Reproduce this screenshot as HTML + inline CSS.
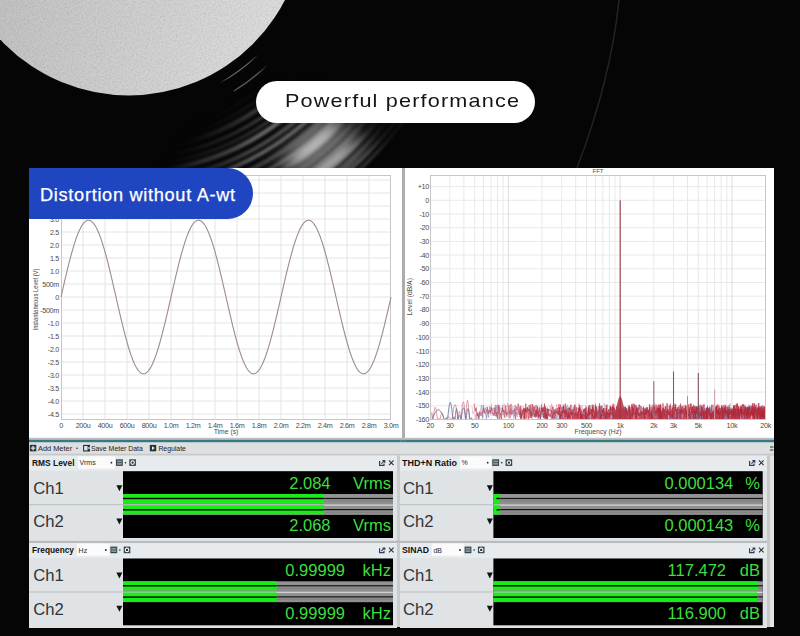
<!DOCTYPE html>
<html><head><meta charset="utf-8"><style>
*{margin:0;padding:0;box-sizing:border-box}
html,body{width:800px;height:636px;overflow:hidden;background:#000}
body{position:relative;font-family:"Liberation Sans", sans-serif}
.abs{position:absolute}
#pill{position:absolute;left:256px;top:81.2px;width:279px;height:42.3px;border-radius:21.2px;background:#fff;}
#pill span{position:absolute;left:28.8px;top:8.7px;font-size:18.5px;letter-spacing:1.0px;transform:scaleX(1.17);transform-origin:0 0;color:#151515;white-space:nowrap;line-height:22px}
#shot{position:absolute;left:29px;top:168px;width:745px;height:459px;background:#e2e4e6;overflow:hidden}
#lc{position:absolute;left:0;top:0;width:373px;height:270px;background:#fff}
#rc{position:absolute;left:376px;top:0;width:369px;height:270px;background:#fff}
#vsep{position:absolute;left:373px;top:0;width:3px;height:270px;background:linear-gradient(90deg,#fff 0,#fff 0.3px,#adadad 0.3px,#adadad 2.7px,#fff 2.7px)}
#teal{position:absolute;left:0;top:271px;width:745px;height:3.5px;background:#45737f}
#tb{position:absolute;left:0;top:274.5px;width:745px;height:12px;background:#e0e2e4;font-size:8.6px;color:#2a2a2a}
#tbl{position:absolute;left:0;top:286.5px;width:745px;height:1px;background:#c4c6c8}
#label{position:absolute;left:29px;top:168px;width:224px;height:51px;background:#1f45c0;border-radius:0 25.5px 25.5px 0}
#label span{position:absolute;left:11px;top:15.5px;font-size:18.2px;letter-spacing:0.69px;-webkit-text-stroke:0.25px #fff;color:#fff;white-space:nowrap;line-height:22px}
.mp{position:absolute;height:85px;background:#dde2e5}
.mh{position:absolute;left:0;top:0;right:0;height:14px;background:#e5e9ec;font-size:9.2px;line-height:14px}
.mt{position:absolute;left:3px;top:0;font-weight:bold;color:#111}
.dd{position:absolute;left:48px;top:1px;height:12px;background:#fbfbfb;font-size:7.5px;line-height:12px;color:#333}
.ddt{position:absolute;left:2px}
.dda{position:absolute;right:1px;font-size:6px}
.ch{position:absolute;left:5px;font-size:17.5px;color:#222;line-height:20px}
.tri{position:absolute;left:87px;width:0;height:0;border-left:3.2px solid transparent;border-right:3.2px solid transparent;border-top:6px solid #111}
.sep{position:absolute;left:0;top:48px;width:94px;height:1px;background:#b8bcbf}
.disp{position:absolute;left:94px;top:15px;height:67px;background:#000;overflow:hidden}
.val,.unit{position:absolute;font-size:16px;line-height:18px;color:#3ee03e;white-space:nowrap}
.gbar{position:absolute;left:0;right:0;height:9px;background:#9a9a9a}
.gr{position:absolute;left:0;background:#1ef01e}
</style></head><body>

<svg width="800" height="636" style="position:absolute;left:0;top:0">
<defs>
 <filter id="tex" x="-10%" y="-10%" width="120%" height="120%">
  <feTurbulence type="fractalNoise" baseFrequency="0.55" numOctaves="3" seed="3" result="n"/>
  <feColorMatrix in="n" type="matrix" values="0 0 0 0 0  0 0 0 0 0  0 0 0 0 0  0 0 0 -1.2 0.75" result="g"/>
  <feComposite in="g" in2="SourceAlpha" operator="in"/>
 </filter>
 <linearGradient id="lab" x1="0" y1="0" x2="260" y2="70" gradientUnits="userSpaceOnUse">
  <stop offset="0" stop-color="#c2c2c2"/>
  <stop offset="0.5" stop-color="#cfcfcf"/>
  <stop offset="1" stop-color="#dcdcdc"/>
 </linearGradient>
 <filter id="blurD" x="-50%" y="-50%" width="200%" height="200%"><feGaussianBlur stdDeviation="1.6"/></filter>
 <filter id="blurA" x="-50%" y="-50%" width="200%" height="200%"><feGaussianBlur stdDeviation="2.8"/></filter>
 <filter id="blurM" x="-50%" y="-50%" width="200%" height="200%"><feGaussianBlur stdDeviation="11"/></filter>
 <filter id="blurG" x="-80%" y="-80%" width="260%" height="260%"><feGaussianBlur stdDeviation="14"/></filter>
 <filter id="blurT" x="-50%" y="-50%" width="200%" height="200%"><feGaussianBlur stdDeviation="0.6"/></filter>
 <mask id="wm2" maskUnits="userSpaceOnUse" x="0" y="0" width="800" height="636"><path d="M242.45 46.03L216.26 65.42L242.01 108.28L275.91 83.19Z" fill="#fff" filter="url(#blurM2)"/></mask>
 <filter id="blurM2" x="-50%" y="-50%" width="200%" height="200%"><feGaussianBlur stdDeviation="5"/></filter>
 <mask id="wm3" maskUnits="userSpaceOnUse" x="0" y="0" width="800" height="636">
  <g filter="url(#blurM)"><path d="M250 104L305 96L440 172L172 178Z" fill="#8a8a8a"/><path d="M262 112L310 105L380 172L230 176Z" fill="#fff"/><path d="M380 100L560 172L420 175Z" fill="#444"/></g>
 </mask>
 <mask id="wm" maskUnits="userSpaceOnUse" x="0" y="0" width="800" height="636">
  <path d="M241.84 32.84L218.17 52.35L330.01 218.15L383.26 174.26Z" fill="#fff" filter="url(#blurM)"/>
 </mask>
</defs>
<rect width="800" height="636" fill="#050506"/>
<ellipse cx="318" cy="150" rx="55" ry="22" transform="rotate(-42 318 150)" fill="#3a3a3a" filter="url(#blurG)"/>

<g filter="url(#blurT)" mask="url(#wm2)"><path d="M219.36 83.25A187 187 0 0 0 257.42 55.35" stroke="#6a6a6a" stroke-width="1.3" fill="none"/><path d="M233.72 91.08A201 201 0 0 0 267.06 65.5" stroke="#5a5a5a" stroke-width="1.3" fill="none"/></g>
<g mask="url(#wm3)"><g filter="url(#blurD)"><path d="M151.07 132.53A214 214 0 0 0 317.65 20.17" stroke="rgb(75,75,75)" stroke-width="2.59" fill="none"/><path d="M151.86 140.07A221.5842329704427 221.5842329704427 0 0 0 324.35 23.73" stroke="rgb(73,73,73)" stroke-width="2.39" fill="none"/><path d="M152.66 147.64A229.19059702838302 229.19059702838302 0 0 0 331.06 27.3" stroke="rgb(114,114,114)" stroke-width="4.29" fill="none"/><path d="M153.6 156.65A238.2512474384048 238.2512474384048 0 0 0 339.06 31.55" stroke="rgb(99,99,99)" stroke-width="2.55" fill="none"/><path d="M154.35 163.71A245.35797801217058 245.35797801217058 0 0 0 345.34 34.89" stroke="rgb(75,75,75)" stroke-width="2.43" fill="none"/><path d="M155.06 170.53A252.21557974248626 252.21557974248626 0 0 0 351.39 38.11" stroke="rgb(115,115,115)" stroke-width="4.32" fill="none"/><path d="M156.03 179.71A261.44218912929557 261.44218912929557 0 0 0 359.54 42.44" stroke="rgb(80,80,80)" stroke-width="4" fill="none"/><path d="M156.78 186.91A268.6815889584937 268.6815889584937 0 0 0 365.93 45.84" stroke="rgb(110,110,110)" stroke-width="3.57" fill="none"/><path d="M157.77 196.28A278.1001823904591 278.1001823904591 0 0 0 374.25 50.26" stroke="rgb(74,74,74)" stroke-width="4.2" fill="none"/><path d="M158.65 204.65A286.5235899253386 286.5235899253386 0 0 0 381.69 54.21" stroke="rgb(97,97,97)" stroke-width="3.68" fill="none"/><path d="M159.35 211.33A293.23475062230176 293.23475062230176 0 0 0 387.61 57.37" stroke="rgb(74,74,74)" stroke-width="3.18" fill="none"/><path d="M160.37 221.01A302.9731040779014 302.9731040779014 0 0 0 396.21 61.94" stroke="rgb(100,100,100)" stroke-width="4.16" fill="none"/><path d="M161.12 228.17A310.1740870361947 310.1740870361947 0 0 0 402.57 65.32" stroke="rgb(101,101,101)" stroke-width="4.27" fill="none"/><path d="M162.12 237.65A319.70335599570984 319.70335599570984 0 0 0 410.98 69.79" stroke="rgb(97,97,97)" stroke-width="4.12" fill="none"/><path d="M162.92 245.27A327.35914016823676 327.35914016823676 0 0 0 417.74 73.39" stroke="rgb(93,93,93)" stroke-width="3.5" fill="none"/><path d="M163.61 251.87A334.0044225927232 334.0044225927232 0 0 0 423.61 76.51" stroke="rgb(114,114,114)" stroke-width="2.76" fill="none"/><path d="M164.26 258.01A340.1773764690122 340.1773764690122 0 0 0 429.06 79.4" stroke="rgb(104,104,104)" stroke-width="2.12" fill="none"/></g></g>
<g mask="url(#wm)"><g filter="url(#blurA)"><path d="M268.7 162.19A280 280 0 0 0 330.12 114.2" stroke="#6a6a6a" stroke-width="8" fill="none"/><path d="M279.09 169.99A292 292 0 0 0 342.26 118.84" stroke="#b4b4b4" stroke-width="12" fill="none"/><path d="M289.8 177.51A304 304 0 0 0 351.03 127.03" stroke="#707070" stroke-width="5" fill="none"/><path d="M300.81 184.72A316 316 0 0 0 363.53 131.15" stroke="#a0a0a0" stroke-width="11" fill="none"/><path d="M317.98 190.02A330 330 0 0 0 381.49 131.82" stroke="#5a5a5a" stroke-width="6" fill="none"/></g></g>
<path d="M 619 0 C 614 50, 601 105, 577 168" stroke="#242426" stroke-width="1.5" fill="none" filter="url(#blurT)"/>
<circle cx="128.7" cy="-80.3" r="175.7" fill="url(#lab)"/>
<circle cx="128.7" cy="-80.3" r="175.7" fill="#000" filter="url(#tex)" opacity="0.14"/>
</svg>
<div id="pill"><span>Powerful performance</span></div>
<div id="shot">
 <div id="lc"><svg width="373" height="270" style="position:absolute;left:0;top:0"><path d="M32 246H362M32 233H362M32 220H362M32 207H362M32 194H362M32 181H362M32 168H362M32 155H362M32 142H362M32 129H362M32 116H362M32 103H362M32 90H362M32 77H362M32 64H362M32 51H362M32 38H362M32 25H362M32 12H362M54 7V252M76 7V252M98 7V252M120 7V252M142 7V252M164 7V252M186 7V252M208 7V252M230 7V252M252 7V252M274 7V252M296 7V252M318 7V252M340 7V252" stroke="#e4e4e4" stroke-width="1" fill="none"/><rect x="32.5" y="7.5" width="329" height="244" fill="none" stroke="#c6c6c6" stroke-width="1"/><polyline points="32,129 32.83,125.38 33.65,121.77 34.48,118.18 35.3,114.61 36.12,111.07 36.95,107.57 37.78,104.12 38.6,100.73 39.42,97.4 40.25,94.13 41.08,90.95 41.9,87.85 42.72,84.84 43.55,81.93 44.38,79.12 45.2,76.43 46.03,73.85 46.85,71.39 47.67,69.06 48.5,66.87 49.33,64.81 50.15,62.9 50.97,61.13 51.8,59.51 52.62,58.05 53.45,56.74 54.28,55.6 55.1,54.61 55.92,53.8 56.75,53.15 57.58,52.66 58.4,52.35 59.22,52.21 60.05,52.24 60.88,52.44 61.7,52.81 62.53,53.34 63.35,54.05 64.17,54.92 65,55.96 65.83,57.16 66.65,58.52 67.47,60.03 68.3,61.7 69.12,63.52 69.95,65.48 70.78,67.58 71.6,69.82 72.42,72.2 73.25,74.69 74.08,77.31 74.9,80.05 75.72,82.89 76.55,85.83 77.38,88.87 78.2,92 79.03,95.21 79.85,98.5 80.67,101.85 81.5,105.27 82.33,108.73 83.15,112.25 83.97,115.8 84.8,119.37 85.62,122.97 86.45,126.59 87.28,130.21 88.1,133.82 88.92,137.43 89.75,141.01 90.58,144.57 91.4,148.1 92.22,151.58 93.05,155.02 93.88,158.39 94.7,161.7 95.53,164.94 96.35,168.09 97.17,171.16 98,174.14 98.83,177.02 99.65,179.79 100.47,182.45 101.3,184.98 102.12,187.4 102.95,189.68 103.78,191.83 104.6,193.84 105.43,195.71 106.25,197.43 107.07,199 107.9,200.41 108.72,201.66 109.55,202.75 110.38,203.68 111.2,204.44 112.03,205.03 112.85,205.46 113.68,205.71 114.5,205.8 115.32,205.71 116.15,205.46 116.97,205.03 117.8,204.44 118.62,203.68 119.45,202.75 120.28,201.66 121.1,200.41 121.93,199 122.75,197.43 123.57,195.71 124.4,193.84 125.22,191.83 126.05,189.68 126.88,187.4 127.7,184.98 128.53,182.45 129.35,179.79 130.18,177.02 131,174.14 131.82,171.16 132.65,168.09 133.47,164.94 134.3,161.7 135.12,158.39 135.95,155.02 136.78,151.58 137.6,148.1 138.43,144.57 139.25,141.01 140.07,137.43 140.9,133.82 141.72,130.21 142.55,126.59 143.38,122.97 144.2,119.37 145.03,115.8 145.85,112.25 146.68,108.73 147.5,105.27 148.32,101.85 149.15,98.5 149.97,95.21 150.8,92 151.62,88.87 152.45,85.83 153.28,82.89 154.1,80.05 154.93,77.31 155.75,74.69 156.57,72.2 157.4,69.82 158.22,67.58 159.05,65.48 159.88,63.52 160.7,61.7 161.53,60.03 162.35,58.52 163.18,57.16 164,55.96 164.82,54.92 165.65,54.05 166.47,53.34 167.3,52.81 168.12,52.44 168.95,52.24 169.78,52.21 170.6,52.35 171.43,52.66 172.25,53.15 173.07,53.8 173.9,54.61 174.72,55.6 175.55,56.74 176.38,58.05 177.2,59.51 178.03,61.13 178.85,62.9 179.68,64.81 180.5,66.87 181.32,69.06 182.15,71.39 182.97,73.85 183.8,76.43 184.62,79.12 185.45,81.93 186.28,84.84 187.1,87.85 187.93,90.95 188.75,94.13 189.57,97.4 190.4,100.73 191.22,104.12 192.05,107.57 192.88,111.07 193.7,114.61 194.53,118.18 195.35,121.77 196.18,125.38 197,129 197.82,132.62 198.65,136.23 199.47,139.82 200.3,143.39 201.12,146.93 201.95,150.43 202.78,153.88 203.6,157.27 204.43,160.6 205.25,163.87 206.07,167.05 206.9,170.15 207.72,173.16 208.55,176.07 209.38,178.88 210.2,181.57 211.03,184.15 211.85,186.61 212.68,188.94 213.5,191.13 214.32,193.19 215.15,195.1 215.97,196.87 216.8,198.49 217.62,199.95 218.45,201.26 219.28,202.4 220.1,203.39 220.93,204.2 221.75,204.85 222.57,205.34 223.4,205.65 224.22,205.79 225.05,205.76 225.88,205.56 226.7,205.19 227.52,204.66 228.35,203.95 229.18,203.08 230,202.04 230.82,200.84 231.65,199.48 232.48,197.97 233.3,196.3 234.12,194.48 234.95,192.52 235.77,190.42 236.6,188.18 237.43,185.8 238.25,183.31 239.07,180.69 239.9,177.95 240.73,175.11 241.55,172.17 242.38,169.13 243.2,166 244.02,162.79 244.85,159.5 245.68,156.15 246.5,152.73 247.32,149.27 248.15,145.75 248.98,142.2 249.8,138.63 250.62,135.03 251.45,131.41 252.27,127.79 253.1,124.18 253.93,120.57 254.75,116.99 255.57,113.43 256.4,109.9 257.23,106.42 258.05,102.98 258.88,99.61 259.7,96.3 260.52,93.06 261.35,89.91 262.18,86.84 263,83.86 263.82,80.98 264.65,78.21 265.48,75.55 266.3,73.02 267.12,70.6 267.95,68.32 268.77,66.17 269.6,64.16 270.43,62.29 271.25,60.57 272.07,59 272.9,57.59 273.73,56.34 274.55,55.25 275.38,54.32 276.2,53.56 277.02,52.97 277.85,52.54 278.68,52.29 279.5,52.2 280.32,52.29 281.15,52.54 281.98,52.97 282.8,53.56 283.62,54.32 284.45,55.25 285.27,56.34 286.1,57.59 286.93,59 287.75,60.57 288.57,62.29 289.4,64.16 290.23,66.17 291.05,68.32 291.88,70.6 292.7,73.02 293.52,75.55 294.35,78.21 295.18,80.98 296,83.86 296.82,86.84 297.65,89.91 298.48,93.06 299.3,96.3 300.12,99.61 300.95,102.98 301.77,106.42 302.6,109.9 303.43,113.43 304.25,116.99 305.07,120.57 305.9,124.18 306.73,127.79 307.55,131.41 308.38,135.03 309.2,138.63 310.02,142.2 310.85,145.75 311.68,149.27 312.5,152.73 313.32,156.15 314.15,159.5 314.98,162.79 315.8,166 316.62,169.13 317.45,172.17 318.27,175.11 319.1,177.95 319.93,180.69 320.75,183.31 321.57,185.8 322.4,188.18 323.23,190.42 324.05,192.52 324.88,194.48 325.7,196.3 326.52,197.97 327.35,199.48 328.18,200.84 329,202.04 329.82,203.08 330.65,203.95 331.48,204.66 332.3,205.19 333.12,205.56 333.95,205.76 334.77,205.79 335.6,205.65 336.43,205.34 337.25,204.85 338.07,204.2 338.9,203.39 339.73,202.4 340.55,201.26 341.38,199.95 342.2,198.49 343.02,196.87 343.85,195.1 344.68,193.19 345.5,191.13 346.32,188.94 347.15,186.61 347.98,184.15 348.8,181.57 349.62,178.88 350.45,176.07 351.27,173.16 352.1,170.15 352.93,167.05 353.75,163.87 354.57,160.6 355.4,157.27 356.23,153.88 357.05,150.43 357.88,146.93 358.7,143.39 359.52,139.82 360.35,136.23 361.18,132.62 362,129" fill="none" stroke="#9e8a8a" stroke-width="1.1"/><text x="30" y="248.5" text-anchor="end" font-size="7.2" fill="#4a4a4a" letter-spacing="-0.3" font-family='"Liberation Sans", sans-serif'>-4.5</text><text x="30" y="235.5" text-anchor="end" font-size="7.2" fill="#4a4a4a" letter-spacing="-0.3" font-family='"Liberation Sans", sans-serif'>-4.0</text><text x="30" y="222.5" text-anchor="end" font-size="7.2" fill="#4a4a4a" letter-spacing="-0.3" font-family='"Liberation Sans", sans-serif'>-3.5</text><text x="30" y="209.5" text-anchor="end" font-size="7.2" fill="#4a4a4a" letter-spacing="-0.3" font-family='"Liberation Sans", sans-serif'>-3.0</text><text x="30" y="196.5" text-anchor="end" font-size="7.2" fill="#4a4a4a" letter-spacing="-0.3" font-family='"Liberation Sans", sans-serif'>-2.5</text><text x="30" y="183.5" text-anchor="end" font-size="7.2" fill="#4a4a4a" letter-spacing="-0.3" font-family='"Liberation Sans", sans-serif'>-2.0</text><text x="30" y="170.5" text-anchor="end" font-size="7.2" fill="#4a4a4a" letter-spacing="-0.3" font-family='"Liberation Sans", sans-serif'>-1.5</text><text x="30" y="157.5" text-anchor="end" font-size="7.2" fill="#4a4a4a" letter-spacing="-0.3" font-family='"Liberation Sans", sans-serif'>-1.0</text><text x="30" y="144.5" text-anchor="end" font-size="7.2" fill="#4a4a4a" letter-spacing="-0.3" font-family='"Liberation Sans", sans-serif'>-500m</text><text x="30" y="131.5" text-anchor="end" font-size="7.2" fill="#4a4a4a" letter-spacing="-0.3" font-family='"Liberation Sans", sans-serif'>0</text><text x="30" y="118.5" text-anchor="end" font-size="7.2" fill="#4a4a4a" letter-spacing="-0.3" font-family='"Liberation Sans", sans-serif'>500m</text><text x="30" y="105.5" text-anchor="end" font-size="7.2" fill="#4a4a4a" letter-spacing="-0.3" font-family='"Liberation Sans", sans-serif'>1.0</text><text x="30" y="92.5" text-anchor="end" font-size="7.2" fill="#4a4a4a" letter-spacing="-0.3" font-family='"Liberation Sans", sans-serif'>1.5</text><text x="30" y="79.5" text-anchor="end" font-size="7.2" fill="#4a4a4a" letter-spacing="-0.3" font-family='"Liberation Sans", sans-serif'>2.0</text><text x="30" y="66.5" text-anchor="end" font-size="7.2" fill="#4a4a4a" letter-spacing="-0.3" font-family='"Liberation Sans", sans-serif'>2.5</text><text x="30" y="53.5" text-anchor="end" font-size="7.2" fill="#4a4a4a" letter-spacing="-0.3" font-family='"Liberation Sans", sans-serif'>3.0</text><text x="32" y="260" text-anchor="middle" font-size="7.2" fill="#4a4a4a" letter-spacing="-0.35" font-family='"Liberation Sans", sans-serif'>0</text><text x="54" y="260" text-anchor="middle" font-size="7.2" fill="#4a4a4a" letter-spacing="-0.35" font-family='"Liberation Sans", sans-serif'>200u</text><text x="76" y="260" text-anchor="middle" font-size="7.2" fill="#4a4a4a" letter-spacing="-0.35" font-family='"Liberation Sans", sans-serif'>400u</text><text x="98" y="260" text-anchor="middle" font-size="7.2" fill="#4a4a4a" letter-spacing="-0.35" font-family='"Liberation Sans", sans-serif'>600u</text><text x="120" y="260" text-anchor="middle" font-size="7.2" fill="#4a4a4a" letter-spacing="-0.35" font-family='"Liberation Sans", sans-serif'>800u</text><text x="142" y="260" text-anchor="middle" font-size="7.2" fill="#4a4a4a" letter-spacing="-0.35" font-family='"Liberation Sans", sans-serif'>1.0m</text><text x="164" y="260" text-anchor="middle" font-size="7.2" fill="#4a4a4a" letter-spacing="-0.35" font-family='"Liberation Sans", sans-serif'>1.2m</text><text x="186" y="260" text-anchor="middle" font-size="7.2" fill="#4a4a4a" letter-spacing="-0.35" font-family='"Liberation Sans", sans-serif'>1.4m</text><text x="208" y="260" text-anchor="middle" font-size="7.2" fill="#4a4a4a" letter-spacing="-0.35" font-family='"Liberation Sans", sans-serif'>1.6m</text><text x="230" y="260" text-anchor="middle" font-size="7.2" fill="#4a4a4a" letter-spacing="-0.35" font-family='"Liberation Sans", sans-serif'>1.8m</text><text x="252" y="260" text-anchor="middle" font-size="7.2" fill="#4a4a4a" letter-spacing="-0.35" font-family='"Liberation Sans", sans-serif'>2.0m</text><text x="274" y="260" text-anchor="middle" font-size="7.2" fill="#4a4a4a" letter-spacing="-0.35" font-family='"Liberation Sans", sans-serif'>2.2m</text><text x="296" y="260" text-anchor="middle" font-size="7.2" fill="#4a4a4a" letter-spacing="-0.35" font-family='"Liberation Sans", sans-serif'>2.4m</text><text x="318" y="260" text-anchor="middle" font-size="7.2" fill="#4a4a4a" letter-spacing="-0.35" font-family='"Liberation Sans", sans-serif'>2.6m</text><text x="340" y="260" text-anchor="middle" font-size="7.2" fill="#4a4a4a" letter-spacing="-0.35" font-family='"Liberation Sans", sans-serif'>2.8m</text><text x="362" y="260" text-anchor="middle" font-size="7.2" fill="#4a4a4a" letter-spacing="-0.35" font-family='"Liberation Sans", sans-serif'>3.0m</text><text x="197" y="266.3" text-anchor="middle" font-size="6.8" fill="#4a4a4a" font-family='"Liberation Sans", sans-serif'>Time (s)</text><text transform="translate(8.799999999999997 131.5) rotate(-90)" text-anchor="middle" font-size="6.8" fill="#4a4a4a" font-family='"Liberation Sans", sans-serif' textLength="62" lengthAdjust="spacingAndGlyphs">Instantaneous Level (V)</text></svg></div>
 <div id="vsep"></div>
 <div id="rc"><svg width="369" height="270" style="position:absolute;left:0;top:0"><path d="M25 18.6H361M25 32.3H361M25 46H361M25 59.7H361M25 73.4H361M25 87.1H361M25 100.8H361M25 114.5H361M25 128.2H361M25 141.9H361M25 155.6H361M25 169.3H361M25 183H361M25 196.7H361M25 210.4H361M25 224.1H361M25 237.8H361M44.89 7V252M58.86 7V252M69.69 7V252M78.54 7V252M86.03 7V252M92.51 7V252M98.23 7V252M137 7V252M156.69 7V252M170.66 7V252M181.49 7V252M190.34 7V252M197.83 7V252M204.31 7V252M210.03 7V252M248.8 7V252M268.49 7V252M282.46 7V252M293.29 7V252M302.14 7V252M309.63 7V252M316.11 7V252M321.83 7V252" stroke="#e9e9e9" stroke-width="1" fill="none"/><path d="M103.34 7V252M215.14 7V252M326.94 7V252" stroke="#dedede" stroke-width="1" fill="none"/><polyline points="25.5,252 25.68,251.04 25.86,249.3 26.04,247.74 26.21,246.44 26.39,245.46 26.57,244.86 26.75,244.65 26.93,244.86 27.11,245.46 27.29,246.44 27.46,247.74 27.64,249.3 27.82,251.04 28,252 28,252 28.32,249.82 28.64,246.93 28.96,244.33 29.29,242.16 29.61,240.53 29.93,239.51 30.25,239.17 30.57,239.51 30.89,240.53 31.21,242.16 31.54,244.33 31.86,246.93 32.18,249.82 32.5,252 32.5,252 32.68,252 32.86,251.68 33.04,251.16 33.21,250.73 33.39,250.4 33.57,250.2 33.75,250.13 33.93,250.2 34.11,250.4 34.29,250.73 34.46,251.16 34.64,251.68 34.82,252 35,252 35,252 35.29,251.04 35.57,249.3 35.86,247.74 36.14,246.44 36.43,245.46 36.71,244.86 37,244.65 37.29,244.86 37.57,245.46 37.86,246.44 38.14,247.74 38.43,249.3 38.71,251.04 39,252 39,252 39.57,251.96 40.14,251.09 40.71,250.31 41.29,249.66 41.86,249.17 42.43,248.86 43,248.76 43.57,248.86 44.14,249.17 44.71,249.66 45.29,250.31 45.86,251.09 46.43,251.96 47,252 47,252 47.43,249.21 47.86,245.74 48.29,242.62 48.71,240.02 49.14,238.06 49.57,236.84 50,236.43 50.43,236.84 50.86,238.06 51.29,240.02 51.71,242.62 52.14,245.74 52.57,249.21 53,252 53,252 53.21,250.74 53.43,248.71 53.64,246.89 53.86,245.37 54.07,244.23 54.29,243.52 54.5,243.28 54.71,243.52 54.93,244.23 55.14,245.37 55.36,246.89 55.57,248.71 55.79,250.74 56,252 56,252 56.32,248.6 56.64,244.55 56.96,240.91 57.29,237.87 57.61,235.59 57.93,234.17 58.25,233.69 58.57,234.17 58.89,235.59 59.21,237.87 59.54,240.91 59.86,244.55 60.18,248.6 60.5,252 60.5,252 60.79,248.3 61.07,243.95 61.36,240.06 61.64,236.8 61.93,234.36 62.21,232.84 62.5,232.32 62.79,232.84 63.07,234.36 63.36,236.8 63.64,240.06 63.93,243.95 64.21,248.3 64.5,252 64.5,252 64.75,252 65,251.68 65.25,251.16 65.5,250.73 65.75,250.4 66,250.2 66.25,250.13 66.5,250.2 66.75,250.4 67,250.73 67.25,251.16 67.5,251.68 67.75,252 68,252" fill="none" stroke="#d88494" stroke-width="0.9" opacity="0.9"/><polyline points="25.5,252 25.57,252 25.64,252 25.71,252 25.79,251.8 25.86,251.64 25.93,251.53 26,251.5 26.07,251.53 26.14,251.64 26.21,251.8 26.29,252 26.36,252 26.43,252 26.5,252 26.5,252 27.46,250.43 28.43,248.11 29.39,246.04 30.36,244.3 31.32,243 32.29,242.18 33.25,241.91 34.21,242.18 35.18,243 36.14,244.3 37.11,246.04 38.07,248.11 39.04,250.43 40,252 40,252 40.18,252 40.36,251.68 40.54,251.16 40.71,250.73 40.89,250.4 41.07,250.2 41.25,250.13 41.43,250.2 41.61,250.4 41.79,250.73 41.96,251.16 42.14,251.68 42.32,252 42.5,252 42.5,252 42.89,248.75 43.29,244.85 43.68,241.34 44.07,238.41 44.46,236.21 44.86,234.84 45.25,234.38 45.64,234.84 46.04,236.21 46.43,238.41 46.82,241.34 47.21,244.85 47.61,248.75 48,252 48,252 48.14,251.96 48.29,251.09 48.43,250.31 48.57,249.66 48.71,249.17 48.86,248.86 49,248.76 49.14,248.86 49.29,249.17 49.43,249.66 49.57,250.31 49.71,251.09 49.86,251.96 50,252 50,252 50.21,250.13 50.43,247.52 50.64,245.18 50.86,243.23 51.07,241.76 51.29,240.85 51.5,240.54 51.71,240.85 51.93,241.76 52.14,243.23 52.36,245.18 52.57,247.52 52.79,250.13 53,252 53,252 53.21,251.65 53.43,250.49 53.64,249.45 53.86,248.59 54.07,247.93 54.29,247.53 54.5,247.39 54.71,247.53 54.93,247.93 55.14,248.59 55.36,249.45 55.57,250.49 55.79,251.65 56,252 56,252 56.36,249.97 56.71,247.22 57.07,244.76 57.43,242.69 57.79,241.14 58.14,240.18 58.5,239.86 58.86,240.18 59.21,241.14 59.57,242.69 59.93,244.76 60.29,247.22 60.64,249.97 61,252 61,252 61.29,250.13 61.57,247.52 61.86,245.18 62.14,243.23 62.43,241.76 62.71,240.85 63,240.54 63.29,240.85 63.57,241.76 63.86,243.23 64.14,245.18 64.43,247.52 64.71,250.13 65,252 65,252 65.21,252 65.43,251.68 65.64,251.16 65.86,250.73 66.07,250.4 66.29,250.2 66.5,250.13 66.71,250.2 66.93,250.4 67.14,250.73 67.36,251.16 67.57,251.68 67.79,252 68,252" fill="none" stroke="#64709a" stroke-width="0.9" opacity="0.9"/><polygon points="155,252 155,243.98 156.19,243.02 157.55,243.31 158.89,247.19 159.86,242.17 160.98,242.39 161.67,244.75 162.46,244.34 163.52,247.23 164.3,245.77 165.63,243.09 166.36,242.91 167.07,243.89 167.77,247.25 169.07,246.1 169.84,241.86 171.14,245.64 172.51,244.26 173.65,246.08 175,243.41 176.38,242.28 177.21,245.19 177.95,246.36 178.6,245.5 179.68,247.13 180.82,245.28 181.67,242.64 182.66,245.38 183.64,243.24 184.29,241.75 184.91,242.98 186.18,246.98 187.41,245.06 188.47,247.01 189.11,246.06 190.48,245.96 191.68,241.93 193.03,245.12 193.92,244.13 195.14,246.4 196.34,242.61 197.62,246.76 198.98,246.45 199.85,243.6 201.19,245.07 202.53,243.93 203.38,245.17 204.12,246.47 204.84,243.12 206.24,245.99 206.88,241.47 207.9,244.64 208.69,243.6 209.95,244.34 210.89,246.53 212.22,246.64 213.22,242.21 213.92,242.79 215.28,243.33 216.51,246.19 217.46,245.95 218.74,245.14 219.7,241.27 220.98,241.38 221.94,244.05 223.13,244.09 223.96,244.49 224.68,244.63 226.07,241.42 227.17,243.93 228.04,246.17 228.86,242.37 230.15,244.66 231.38,242.38 232.54,242.98 233.74,244.61 234.91,245.05 235.9,242.36 237.05,244.96 238.41,243 239.47,246.48 240.51,245.16 241.64,243.99 242.9,242.97 244.14,244.59 245.25,242.45 246.51,244.56 247.79,241.7 248.94,241.1 250.3,243.6 251.33,245.52 252.6,241.28 253.58,242.62 254.75,242.39 255.49,242.11 256.56,242.73 257.49,242.95 258.71,242.87 259.89,246.19 260.62,243.92 261.74,245.12 262.89,242.86 263.52,243.72 264.3,246 265.01,244.55 265.75,245.23 266.38,243.73 267.29,242.92 268.36,244.96 269.68,246.24 270.6,244.71 271.53,245.6 272.8,244.17 273.43,242.85 274.1,243.21 274.97,243.01 276.34,241.69 277.28,241.72 278.39,244.13 279.1,242.89 280.15,240.9 281.53,242.79 282.41,241.22 283.01,245.52 284.06,242.73 284.78,242.65 286.09,244.02 287.03,244.83 287.87,240.74 288.77,240.79 290.1,242.78 290.91,240.66 291.91,243.75 292.76,240.62 293.76,244.44 294.74,245.33 295.83,243.55 296.67,241.69 297.93,245.89 298.96,244.45 300.3,241.66 301.1,244.47 301.83,240.51 302.66,242.58 303.64,242.37 304.72,241.82 305.42,241.72 306.26,242.96 307.13,244.25 308.15,243.32 309.04,241.77 310.11,245.64 310.91,243.34 312.25,240.96 313.28,245.73 314.51,243.45 315.57,241.91 316.67,243.14 318,243.65 318.92,241.09 319.67,244.12 320.94,245.37 322.21,241.92 323.15,244.14 324.38,240.71 325.09,243.07 326.13,242.96 326.99,244.83 328.06,241.21 328.72,244.4 329.97,241.31 331.1,245.49 332.28,240.26 333.68,241.76 334.32,240.99 335.1,242.05 336.46,241.68 337.17,243.97 338.5,244.74 339.59,243.28 340.32,242.13 340.95,244.94 341.86,245.13 342.5,242.37 343.7,240.69 344.4,243.14 345.25,242.2 346.25,240.34 347.15,245.17 348.3,244.63 349.41,242.68 350.74,242.4 351.83,243.98 352.87,244.02 354.08,242.57 354.78,244.11 355.68,241.35 356.42,241.47 357.55,244.9 358.68,244.86 359.38,242.1 360,252" fill="#c43c50" opacity="0.9"/><polyline points="67,238.46 67.89,245.91 68.79,243.65 69.77,244.18 70.75,240.4 71.83,247.33 72.91,245.99 73.81,248.8 74.7,245.26 75.7,244.17 76.7,243.47 77.59,252 78.48,237.92 79.6,243.28 80.71,245.65 81.7,249.26 82.7,244.75 83.65,242.44 84.6,244.32 85.51,243.91 86.42,235.85 87.26,247.9 88.09,242.26 89.04,247.56 90,245.61 90.84,243.38 91.68,237.47 92.54,250.58 93.39,236.22 94.45,244.6 95.52,239.65 96.52,244.87 97.52,240.8 98.33,243.81 99.13,235.9 99.95,243.14 100.78,242.02 101.66,247.92 102.54,235.12 103.41,248.63 104.28,245 105.03,245 105.79,240.58 106.84,247.48 107.88,237.82 108.78,250.44 109.69,239.92 110.61,246.05 111.53,244.16 112.31,249.05 113.1,242.22 114.1,246.32 115.11,244.89 115.92,252 116.74,237.5 117.7,248.76 118.66,238.61 119.58,243.02 120.5,241.56 121.49,242.03 122.49,239.55 123.48,243.19 124.47,241.9 125.32,250.16 126.16,244.24 127.12,252 128.08,237.54 129.01,247.57 129.94,245.45 130.87,250.04 131.81,241.42 132.58,251 133.34,242.31 134.04,243.02 134.74,237.85 135.7,247.62 136.67,235.51 137.41,247.11 138.16,245.71 139.04,250.55 139.92,237.3 140.83,243.21 141.74,241.35 142.58,246.5 143.41,242.64 144.32,247.01 145.22,237.6 145.95,252 146.68,235.56 147.53,252 148.38,238.96 149.19,243.54 150.01,243.2 150.82,248.42 151.63,236.09 152.54,251.41 153.46,244.99 154.12,252 154.77,244.48 155.52,243.36 156.28,244.63 157.09,246.97 157.91,240.61 158.62,250.46 159.33,244 159.99,248.73 160.65,239.99 161.47,252 162.29,236.44 163.11,244.38 163.92,245.93 164.76,247.79 165.59,237.65 166.21,250.95 166.82,243.25 167.63,245.23 168.43,245.56 169.11,248.61 169.79,236.15 170.47,249.64 171.15,240 171.88,242.48 172.61,239.43 173.21,247.3 173.82,235.42 174.61,249.47 175.41,240.26 176.19,246.72 176.97,237.09 177.55,242.16 178.14,242.53 178.81,241.98 179.48,245.19 180.07,252 180.66,237.69 181.46,247.96 182.26,245.8 183,245.8 183.74,240.35 184.42,248.6 185.1,243.55 185.76,252 186.43,243.31 187.1,245.15 187.77,238.09 188.56,247.87 189.34,241.8 189.95,247.53 190.55,235.46 191.27,251.93 191.99,240.63 192.66,245.01 193.33,237.48 194.13,246 194.92,238.7 195.67,243.46 196.41,238.53 197.14,250.18 197.87,241.79 198.65,246.13 199.44,235.46 200.2,242.03 200.95,242.59 201.46,249.45 201.97,244.43 202.59,246.81 203.21,242.7 203.73,242.53 204.25,240.95 204.97,251.68 205.69,238.3 206.47,250.61 207.25,238.99 207.84,245.4 208.43,235.59 208.99,249.34 209.56,236.75 210.12,251.19 210.68,243.83 211.36,246.32 212.05,241.87 212.61,242.56 213.17,241.23 213.78,246.11 214.39,244.11 214.95,248.65 215.5,243.95 216.05,242.34 216.6,237.14 217.08,242.63 217.55,245.81 218.23,247.38 218.9,239.36 219.37,245.19 219.85,245.94 220.37,246.9 220.9,242.63 221.39,247.89 221.87,241.96 222.59,251.39 223.31,237.01 224,247.07 224.68,243.96 225.14,248.45 225.6,243.55 226.21,244.08 226.82,235.88 227.51,243.19 228.2,239.64 228.64,251.99 229.08,237.83 229.79,244.55 230.49,245.37 230.98,243.94 231.46,239.22 232.07,247.71 232.68,242.32 233.35,249.91 234.01,242.75 234.54,246 235.07,245.24 235.75,252 236.44,238.59 237.01,250.79 237.58,245.38 238.07,252 238.56,238.56 239.12,245.71 239.68,244.88 240.13,242.67 240.59,241.54 241.15,245.3 241.72,240.27 242.34,252 242.96,243.68 243.61,252 244.25,240.18 244.76,245.98 245.26,238.24 245.7,247.46 246.15,236.69 246.59,244.03 247.02,238.57 247.68,250.49 248.35,236.13 248.96,247.03 249.58,235.39 250.24,248.59 250.89,235.75 251.55,244.17 252.21,242.16 252.59,246.15 252.97,237.74 253.53,245.78 254.08,235.82 254.5,246.99 254.92,243.75 255.55,241.93 256.18,237.52 256.72,244.76 257.25,242.05 257.87,251.96 258.5,244.07 258.98,246.95 259.46,242.05 260.07,251.43 260.67,241.38 261.03,246.51 261.39,238.73 261.75,250.56 262.11,235.85 262.49,247.14 262.87,240.39 263.49,251.52 264.11,241.37 264.53,245.85 264.94,237.78 265.52,245.74 266.09,241.31 266.51,248.73 266.92,243.11 267.41,246.98 267.89,245.63 268.37,243.85 268.84,237.22 269.35,244.8 269.86,235.13 270.41,248.74 270.96,245.98 271.4,245.59 271.85,239.7 272.35,241.94 272.85,243.53 273.23,244.82 273.61,240.73 274.18,252 274.74,236.96 275.17,247.39 275.6,241.75 276.06,245.98 276.51,238.42 277,243.39 277.5,241.91 278.03,250.13 278.57,237.33 279.11,242.7 279.66,236.73 280.02,243.11 280.39,242.64 280.71,245.92 281.04,236.91 281.39,249.97 281.73,242.78 282.24,250.48 282.74,240.57 283.1,245.05 283.46,238.5 283.83,249.2 284.19,241.98 284.68,250.75 285.17,245.39 285.5,245.24 285.83,244.67 286.25,243.22 286.66,245.79 287.15,244.93 287.63,241.16 288.1,247.38 288.56,241.92 289.13,245.9 289.7,242.01 290.17,249.07 290.65,239.05 291.15,247.86 291.65,243.57 292.08,244.22 292.51,238.97 292.79,247.88 293.07,239.59 293.41,246.48 293.75,240.65 294.04,251.06 294.34,242.44 294.85,249.27 295.36,245.49 295.69,250.82 296.02,239.18 296.33,243.58 296.64,244.8 296.97,247.01 297.3,241.58 297.59,244.53 297.89,238.35 298.21,246.97 298.53,243.36 298.81,246.3 299.1,243.79 299.38,246.55 299.67,240.32 300.17,245.6 300.67,242.7 300.92,249.38 301.18,242.1 301.7,244.27 302.23,240.56 302.49,243.1 302.75,239.67 303.23,250.87 303.71,245.15 304.23,242.3 304.75,238.13 305.23,247.05 305.7,242.28 305.99,245.59 306.28,241.75 306.71,244.09 307.15,242.87 307.4,251.88 307.65,237.33 307.99,244.61 308.32,242.64 308.6,251.64 308.88,241.17 309.31,250.33 309.74,236.54 310.08,248.21 310.42,239.14 310.86,247.68 311.29,242.03 311.68,250.7 312.08,242.68 312.45,249.25 312.82,236.01 313.1,248.21 313.38,245.67 313.66,250.52 313.94,242.33 314.42,245.56 314.9,238.89 315.18,247.94 315.47,240.23 315.9,248.76 316.34,239.51 316.64,243.75 316.93,240.76 317.35,249.27 317.77,236.75 318.25,251.27 318.73,237.56 319.14,245.46 319.55,236.39 320.04,250.17 320.54,242.43 321.04,248.71 321.54,244.19 322.03,248.54 322.52,243.03 322.91,249.94 323.29,239.31 323.73,244.72 324.16,236.46 324.59,243.08 325.02,235.3 325.46,247.4 325.9,240.39 326.3,242.25 326.7,241.3 327.08,245.59 327.46,244.6 327.74,248.64 328.01,245.98 328.23,251.86 328.46,237.65 328.78,252 329.1,244.8 329.47,247.28 329.84,241.13 330.11,245.07 330.37,241.73 330.68,244.89 330.98,242.2 331.19,245.18 331.4,235.29 331.82,250.05 332.25,242.59 332.61,245.18 332.97,244.54 333.39,249.09 333.82,242.16 334.27,245.94 334.72,242.97 335.13,244.28 335.54,242.29 335.71,251.04 335.87,243.68 336.14,252 336.41,244.12 336.81,246.59 337.21,236.71 337.54,243.59 337.87,244.17 338.21,244.53 338.56,235.84 338.74,249.49 338.93,243.65 339.16,248.53 339.39,236.65 339.78,244.69 340.18,243.34 340.55,249.35 340.92,241.27 341.16,243.29 341.4,245.1 341.85,242.3 342.3,240.97 342.72,245.28 343.15,243.97 343.53,246.12 343.91,236.37 344.35,242.88 344.78,238.19 344.95,247.54 345.12,244.19 345.53,246.86 345.94,237.2 346.12,244.95 346.29,242.63 346.44,251.32 346.58,239.12 346.91,252 347.24,235.44 347.66,248.04 348.08,242.04 348.38,246.23 348.69,241.19 348.94,244.65 349.19,242.75 349.37,244.5 349.56,245.27 349.76,242.88 349.95,241.51 350.13,249.43 350.31,242.16 350.51,246.98 350.72,240.18 350.88,252 351.04,243.8 351.19,250.24 351.34,242.83 351.56,243.7 351.79,240.83 352.11,244.42 352.43,242.56 352.76,246.12 353.09,240.16 353.43,244.62 353.77,235.85 354.08,249.98 354.39,235.31 354.71,247.08 355.03,244.98 355.41,244.94 355.8,237.8 355.99,248.23 356.18,243.3 356.46,250.05 356.73,238.97 357.1,245.98 357.47,242.81 357.61,242.26 357.76,240.13 357.93,245.24 358.1,239.95 358.36,242.24 358.62,243.42 358.96,248.15 359.3,238.53 359.53,245.47 359.76,238.43 359.94,248.14" fill="none" stroke="#e0a0b0" stroke-width="0.7" opacity="0.85"/><polyline points="70,245.85 71.12,252 72.25,245.37 73.38,251.55 74.51,243.6 75.53,243.12 76.55,236.87 77.44,249.37 78.33,237.17 79.32,245.36 80.32,239.63 81.4,252 82.49,240.93 83.56,249.46 84.63,238.08 85.49,246.48 86.34,238.91 87.42,242.34 88.49,239.74 89.45,246.16 90.41,236.9 91.27,249.45 92.14,236.93 93.15,245.74 94.17,238.35 94.98,245.55 95.8,246.85 96.63,247.04 97.45,237.25 98.23,247.32 99.01,242.9 99.92,245.63 100.84,244.02 101.88,248.77 102.91,244.13 103.84,246.34 104.76,242.64 105.68,245.49 106.59,246.42 107.49,241.95 108.39,242.66 109.24,248.46 110.08,236.95 111.1,247.26 112.11,246.33 112.96,243.06 113.81,241.4 114.59,249.04 115.36,243.47 116.18,250.77 117,241.52 117.73,244.15 118.46,245.18 119.37,245.27 120.27,242.89 121,243.79 121.72,242.34 122.71,243.59 123.69,241.65 124.54,246.46 125.39,239.24 126.38,247.69 127.37,240.34 128.28,248.99 129.19,238.41 130.11,246.2 131.04,247.19 132,247.39 132.96,243.66 133.83,250.99 134.7,242.63 135.58,249.92 136.46,236.79 137.14,249.01 137.82,245.02 138.52,250.08 139.22,245.41 140.14,249.84 141.06,242.24 141.75,250.59 142.43,239.34 143.19,242.73 143.95,246.97 144.84,248.73 145.74,247.03 146.64,250.64 147.54,243.2 148.33,244.65 149.12,242.3 149.97,250.14 150.82,244.47 151.52,252 152.22,245.66 153.05,243.12 153.88,246.77 154.7,247.4 155.51,246.93 156.31,247.54 157.11,238.99 157.74,252 158.36,236.59 159.17,243.59 159.97,241.53 160.65,251.34 161.33,237.92 162.03,243.91 162.74,243.23 163.35,245.85 163.95,238.59 164.6,243.08 165.25,243.42 166.01,243.57 166.77,245.33 167.52,249.83 168.26,238.2 168.9,247.28 169.53,238.43 170.33,242.2 171.12,242.94 171.76,243.29 172.4,243.15 173.2,245.68 174.01,245.62 174.64,252 175.27,244.8 175.95,247.2 176.64,245.71 177.5,246.76 178.35,240.83 179.17,247.09 180,247.15 180.78,242.47 181.57,238.55 182.33,243.83 183.09,246.66 183.67,250.92 184.25,237.11 184.95,242.9 185.65,240.57 186.32,244.76 186.98,236.75 187.62,242.55 188.26,237.51 189.02,244.09 189.77,243.87 190.5,249.79 191.23,246.76 191.83,242.72 192.43,247.13 193.05,249.41 193.66,242.51 194.22,249.23 194.77,242.16 195.35,248.32 195.92,238.48 196.54,249.51 197.17,237.77 197.84,242.36 198.52,246.95 199.14,242.45 199.77,245.01 200.43,251.47 201.09,243.99 201.67,251.35 202.24,236.49 202.76,243.88 203.28,242.12 203.81,244.09 204.34,246.63 204.99,249.15 205.64,237.37 206.24,246.48 206.85,240.48 207.48,252 208.11,238.53 208.8,245.52 209.49,244.26 210.08,252 210.68,245.7 211.18,247.9 211.69,245.01 212.4,247.69 213.11,240.49 213.77,252 214.44,240.98 215.18,249.55 215.93,239.84 216.47,242.65 217.01,243.03 217.57,246.76 218.14,242.94 218.65,242.81 219.17,238.37 219.79,250 220.42,238.81 221.14,250.4 221.85,239.92 222.46,246.59 223.07,244.76 223.7,246.8 224.33,238.64 224.89,248.79 225.44,241.03 226.17,250.37 226.91,245.99 227.47,244.8 228.04,240.76 228.49,249.49 228.94,246 229.61,245.41 230.27,244.83 230.92,251.44 231.56,240.28 232.1,250.01 232.64,242.55 233.07,244.01 233.5,237.08 233.97,247.3 234.44,246.29 234.9,248.81 235.37,245.46 235.93,251.95 236.49,244.61 237.06,248 237.62,239.75 238.17,246.54 238.72,245.42 239.2,243.46 239.68,246.04 240.1,252 240.52,241.46 241.17,242.75 241.82,243.71 242.41,248.15 243,244.86 243.62,244.07 244.24,246.93 244.76,249.1 245.28,245.78 245.84,242.95 246.4,241.79 247.06,242.96 247.73,241.49 248.33,251.14 248.92,237.31 249.59,247.92 250.26,246.58 250.75,246.08 251.25,243.13 251.88,249.71 252.52,238.69 253.08,251.01 253.63,240.35 254.09,252 254.55,243.93 255.16,243.75 255.78,245.58 256.28,252 256.78,244.54 257.18,244.57 257.58,240.47 258.18,249.5 258.78,239.36 259.33,248.84 259.89,242.25 260.27,250.44 260.65,243.11 261.06,252 261.47,244.31 262.09,243.02 262.72,247.27 263.28,243.01 263.85,241.63 264.44,243.18 265.03,247.11 265.52,251.23 266,237.99 266.44,243.78 266.87,243.56 267.24,251.65 267.62,243.53 268.02,248.33 268.43,240.18 268.81,250.22 269.19,242.11 269.79,248.16 270.38,243.61 270.94,250.06 271.5,244.16 271.87,250.3 272.23,243.5 272.77,245.12 273.32,246.62 273.72,249.53 274.13,237.42 274.57,250.69 275,245.68 275.38,250.09 275.77,237.18 276.37,250.38 276.97,242.06 277.3,246.46 277.63,242.81 277.97,244.45 278.32,239.51 278.63,245.36 278.94,242.05 279.48,247.79 280.02,245.9 280.48,247.24 280.94,243.87 281.32,252 281.69,246.78 282.04,246.94 282.39,241.3 282.76,247.35 283.13,246 283.5,246.34 283.86,239.82 284.36,247.31 284.86,247.12 285.33,249.51 285.79,243.26 286.32,251.73 286.85,238.25 287.27,251.79 287.68,241.93 288,243.31 288.32,244.67 288.72,244.45 289.12,244.15 289.43,246.31 289.74,237.95 290.28,249.3 290.81,243.41 291.17,251.54 291.53,238.99 291.88,242.14 292.24,246.6 292.6,244.77 292.95,238.69 293.51,248.35 294.07,239.05 294.57,244.72 295.06,236.44 295.47,244.31 295.89,242.67 296.22,251.89 296.56,238.43 296.94,247.54 297.31,238.85 297.73,251.91 298.15,242.09 298.51,247.46 298.88,237.12 299.34,244.09 299.8,239.89 300.22,246.97 300.64,240.85 301.19,246.36 301.74,242.79 302.11,244.5 302.47,237.48 302.83,244.89 303.19,239.65 303.73,246.62 304.26,247.19 304.61,245.62 304.97,239.46 305.43,244.55 305.9,239.89 306.15,249.8 306.4,237.87 306.76,248.43 307.11,246.83 307.49,250.88 307.86,245.03 308.16,247.14 308.46,246.41 308.71,251.93 308.95,236.75 309.4,244.65 309.86,245.96 310.24,244.28 310.62,246.55 310.89,247.26 311.16,243.99 311.64,243.41 312.13,236.8 312.45,244.77 312.77,236.6 313.25,243.92 313.74,241.74 314.01,246.9 314.29,244.87 314.73,246.55 315.16,245.37 315.46,247.94 315.76,241.32 316.22,248.98 316.68,243.46 316.96,248.5 317.24,243.98 317.53,250.38 317.82,240.01 318.12,246.02 318.41,237.26 318.81,245.57 319.21,242.97 319.45,247.12 319.7,241.58 320.12,251.85 320.55,240.21 320.9,244.26 321.24,245.05 321.58,252 321.91,239.17 322.26,251.66 322.61,240.85 322.97,246.73 323.32,246.38 323.58,252 323.85,237.56 324.13,248.27 324.42,238.35 324.91,246.47 325.4,241.23 325.72,243.67 326.04,245.68 326.33,243.02 326.62,243.25 326.99,248.49 327.37,241.17 327.59,244.25 327.8,239.75 328.14,244.78 328.47,240.4 328.75,242.22 329.03,245.38 329.43,245.61 329.82,238.89 330.2,245.18 330.57,236.69 331.02,250.57 331.47,246.89 331.79,242.06 332.11,242.72 332.31,246.11 332.52,245.51 332.82,247.36 333.12,242.02 333.36,245.03 333.59,242.5 333.85,245.94 334.11,238.61 334.44,243.1 334.77,245.58 335.22,247.58 335.68,239.74 335.88,248.53 336.08,242.09 336.5,244.12 336.91,240.67 337.08,248.34 337.25,246.26 337.66,251.9 338.07,243.81 338.44,248.1 338.8,236.59 339.08,246.03 339.36,238.19 339.76,243.47 340.17,244.21 340.45,247.22 340.74,237.71 341.16,247.63 341.58,239.03 342,252 342.42,238.69 342.76,252 343.1,240.32 343.35,247.31 343.61,246.4 343.92,250 344.22,243.56 344.62,247.62 345.03,244.29 345.34,248.33 345.66,237.87 345.95,243.64 346.24,241.87 346.43,244.63 346.62,241.57 347.03,245.95 347.43,240.07 347.76,243.08 348.09,236.52 348.52,251.5 348.95,243.14 349.29,249.8 349.64,237.41 349.8,243.08 349.95,241.94 350.24,250.62 350.53,239.09 350.93,251.04 351.34,236.48 351.63,249.98 351.93,243.41 352.16,248.8 352.4,240.5 352.56,250.19 352.71,242.26 353.04,243.63 353.36,237.98 353.71,251.17 354.05,238.9 354.41,249.67 354.76,246.3 354.88,244.41 354.99,246.65 355.4,250.2 355.81,246.64 356.04,245.84 356.27,238.16 356.64,250.91 357.01,238.78 357.39,251.16 357.78,237.19 358.14,243.23 358.51,238.44 358.84,247.01 359.17,239.95 359.28,247.39 359.38,245.93 359.53,243.17 359.68,246.83 360.06,252" fill="none" stroke="#7078b0" stroke-width="0.6" opacity="0.8"/><polyline points="69,235.62 70.12,243.09 71.23,239.53 72.09,248.23 72.95,244.59 73.94,250.77 74.92,243.6 75.88,247.88 76.84,245.08 77.66,245.09 78.49,240.4 79.43,244.82 80.37,245.39 81.29,244.29 82.21,238.81 83.19,246.06 84.17,242.04 85.26,244.54 86.36,239.75 87.26,245.63 88.17,245.08 89.05,247.67 89.93,239.55 90.94,247.97 91.94,244.02 92.91,250.91 93.88,237.08 94.76,250.73 95.63,244.94 96.44,252 97.24,239.74 98.09,243.88 98.94,241.97 99.8,249.71 100.66,237.5 101.51,246.85 102.36,244.85 103.2,244.28 104.03,236.94 104.99,250.26 105.95,235.95 106.86,246.37 107.77,244.19 108.79,242.18 109.82,241.46 110.57,252 111.32,238.49 112.3,242.2 113.27,235.62 114.24,246.97 115.21,237.81 116.23,249.08 117.25,241.89 118.25,250.75 119.26,240.91 120,250.71 120.73,235.6 121.72,250.5 122.71,240.22 123.44,251.01 124.18,237.11 125.04,250.1 125.9,236.15 126.72,248 127.54,236.24 128.34,243.95 129.13,238.48 130.08,248.35 131.04,236.93 131.93,245.86 132.82,242.78 133.57,248.38 134.32,239.91 135.22,246.84 136.13,244.83 137.04,245.95 137.96,239.89 138.72,243.71 139.49,235.59 140.22,252 140.96,240.08 141.78,250.29 142.61,240.86 143.43,247.94 144.25,245.98 145.11,248.74 145.98,244.47 146.86,243.36 147.74,238.55 148.44,250.97 149.14,241.39 149.91,251.97 150.68,240.76 151.52,245.32 152.36,239.93 153.15,247.1 153.94,236.17 154.66,251.92 155.37,236.56 156.25,247.41 157.14,238.64 157.98,246.24 158.83,242.52 159.53,249.04 160.23,235.5 160.93,249.13 161.63,241.42 162.35,243.92 163.07,239.95 163.81,250.07 164.56,245.04 165.24,250.49 165.92,236.68 166.59,247.36 167.26,240.95 167.89,251.54 168.51,241.17 169.27,243.46 170.02,236.69 170.68,250.16 171.34,239.07 172.22,252 173.09,243 173.91,248.9 174.73,236.84 175.34,251.88 175.96,241.68 176.75,245.42 177.54,245.16 178.19,242.84 178.84,244.16 179.6,242.17 180.36,244.02 181.19,252 182.02,244.49 182.75,244.85 183.49,238.25 184.18,246.63 184.87,237.01 185.65,246.26 186.42,242.44 187.14,251.4 187.86,236.63 188.43,250.61 188.99,242.55 189.66,246.08 190.32,236.6 191.01,248.09 191.7,238.88 192.34,244.71 192.98,242.6 193.78,243.15 194.58,235.25 195.4,251.45 196.21,237.54 196.84,243.76 197.47,241.69 198,244.93 198.53,240.16 199.26,250.56 200,245.38 200.63,249.41 201.26,237 201.89,246.41 202.53,243.32 203.15,249.41 203.78,241.14 204.48,250.97 205.17,239.71 205.91,242.27 206.66,239.19 207.31,248.18 207.96,235.95 208.63,242.12 209.3,241.3 209.98,252 210.66,241.73 211.39,248.68 212.13,245.65 212.62,248.59 213.11,237.9 213.88,245.1 214.65,243.03 215.32,251.02 215.99,245.32 216.64,246.42 217.28,240.07 217.9,251.54 218.52,240.83 219,251.27 219.48,242.63 220.13,246.07 220.78,239.37 221.46,247.04 222.14,242.21 222.65,242.15 223.16,242.9 223.69,247.46 224.22,237.35 224.83,249.63 225.44,245.78 226.17,244.21 226.9,236.14 227.51,251.19 228.12,235.64 228.77,245.56 229.41,235.93 229.88,242.24 230.34,236.95 230.81,252 231.27,237.3 231.72,244.98 232.18,239.09 232.89,247.26 233.6,239.74 234.11,241.99 234.61,236.42 235.22,250.71 235.84,238 236.47,252 237.11,244.09 237.77,250.49 238.43,238.76 238.86,251.31 239.29,246.02 239.99,244 240.69,239.78 241.32,246.6 241.95,239.05 242.59,251.34 243.23,242.14 243.87,246.47 244.51,236.11 245.06,248.33 245.6,245.12 246.25,249.3 246.9,239.31 247.49,243.75 248.08,237.21 248.53,244.15 248.98,244.49 249.4,246.48 249.83,239.29 250.5,248.18 251.18,237.15 251.71,247.15 252.24,239.52 252.77,242.65 253.31,236.82 253.92,249.95 254.53,237 255.08,245 255.63,235.99 256.28,251.47 256.94,242.1 257.45,250.62 257.97,235.24 258.48,244.45 258.99,243.3 259.38,248.82 259.77,240.98 260.39,251.12 261.01,243.31 261.53,252 262.05,235.16 262.57,244.37 263.1,244.35 263.67,246.71 264.24,237.7 264.77,247.97 265.31,235.85 265.67,249.96 266.03,240.93 266.59,244.33 267.15,245.01 267.59,248.18 268.03,237.33 268.51,248.44 268.99,241.9 269.52,244.84 270.05,236.37 270.43,242.52 270.82,236.61 271.15,244.34 271.49,244.86 272.02,244.84 272.56,239.16 273.11,242.31 273.67,239.08 274.27,242.73 274.88,242.75 275.24,247.06 275.6,235.58 276.07,245.9 276.54,239.21 277.04,242.51 277.54,237.92 277.97,246.29 278.41,242.3 278.84,251.19 279.27,242.34 279.58,249.58 279.89,240.7 280.21,249.02 280.54,237.47 281.13,245.58 281.71,243.01 282.26,251.6 282.82,243.53 283.3,242.07 283.78,236.31 284.2,250.18 284.62,239.15 284.95,245.28 285.27,235.86 285.63,242.2 286,235.26 286.5,242.09 286.99,238.02 287.33,244.69 287.66,242.3 288.16,246.92 288.67,236.7 289.13,252 289.59,242.57 289.98,244.19 290.37,245.34 290.69,251.6 291,241.25 291.31,243.38 291.62,244.91 292.01,245.53 292.39,239.76 292.76,244.68 293.14,237.98 293.54,246.08 293.95,237.66 294.48,242.99 295,242.93 295.49,247.34 295.98,237.42 296.48,244.87 296.98,236.98 297.49,246.94 298.01,245.54 298.46,247.64 298.91,236.01 299.38,243.57 299.86,243.5 300.25,243.16 300.63,243.92 301.08,252 301.53,239.7 302.05,251.67 302.56,239.58 303.11,244.56 303.65,243.22 304.14,247.14 304.62,239.31 304.92,248.11 305.21,244.75 305.69,250.62 306.17,246 306.52,248.41 306.88,236.53 307.4,250.9 307.93,243.55 308.41,250.24 308.9,242.8 309.32,250.66 309.74,244.08 310,250.76 310.25,245.56 310.76,246.95 311.26,238.13 311.55,252 311.84,237.93 312.17,252 312.51,242.45 312.85,247.56 313.2,245.14 313.61,243.38 314.02,237.56 314.32,251.41 314.62,243.9 314.87,251.95 315.11,244.49 315.4,251.92 315.69,240.23 316.16,247.43 316.63,237.14 317,252 317.36,238.72 317.59,252 317.81,239.17 318.17,243.56 318.53,241.61 318.74,249.44 318.95,245.66 319.33,244.61 319.71,240.01 320.2,245.57 320.69,236.77 321.14,243.89 321.6,245.06 321.94,244.16 322.29,238.34 322.74,249.42 323.19,239.19 323.68,249.45 324.17,243.56 324.59,250.23 325.02,245.42 325.49,243.34 325.95,239.75 326.26,245.3 326.56,243.61 327.02,251.85 327.48,243.56 327.82,248.22 328.16,245.03 328.37,246.65 328.59,243.1 328.79,248.62 328.98,237.19 329.19,242.99 329.4,237.18 329.59,250.94 329.78,245.36 330.18,244.7 330.58,243.18 331.03,251.06 331.49,236.6 331.77,244.32 332.04,236.14 332.27,244.77 332.49,235.36 332.94,251.13 333.4,245.75 333.79,250.77 334.18,243.46 334.51,250.48 334.84,240.98 335.11,242.81 335.38,239.93 335.72,244.99 336.06,237.22 336.28,244.51 336.5,241.09 336.91,246.93 337.31,241 337.5,245.81 337.68,236.2 338.12,249.15 338.57,236.64 338.95,242.33 339.33,242.41 339.69,243.3 340.05,239.8 340.21,247.85 340.37,239.21 340.79,250.67 341.2,245.62 341.4,244.63 341.6,241.93 341.99,250.42 342.37,243.88 342.68,247.1 343,242.52 343.25,245.3 343.5,242.39 343.71,246.69 343.93,244.37 344.36,249.51 344.79,242.57 345.01,247.52 345.23,244.03 345.62,244.99 346,239.75 346.27,247.36 346.54,244.05 346.86,246.12 347.17,237.43 347.43,246.34 347.68,235.2 347.94,250.91 348.2,244.67 348.33,245.31 348.47,237.96 348.63,251.9 348.79,239.2 349.01,252 349.23,235.07 349.49,244.89 349.75,236.06 349.99,246.63 350.24,242.25 350.61,248.69 350.98,237.68 351.31,245.28 351.65,241.4 351.82,249.38 351.99,244.75 352.18,244.67 352.37,242.14 352.54,252 352.7,239.17 353.03,252 353.37,235.11 353.77,244.65 354.17,238.31 354.53,252 354.89,243.42 355.09,252 355.29,239.54 355.59,248.9 355.9,243.45 356.24,249.79 356.57,243.44 356.72,243.55 356.86,237.95 357.12,243.36 357.38,242.06 357.69,242.27 358,241.49 358.13,243.17 358.26,242.14 358.57,243.8 358.88,238.09 359.22,249.95 359.55,238.83 359.86,243.66" fill="none" stroke="#c03848" stroke-width="0.7" opacity="0.85"/><polyline points="115,239.34 115.94,250.87 116.87,245.53 117.89,245.52 118.91,240.12 119.65,251.21 120.39,240.44 121.31,244.48 122.23,239.09 123.06,242.04 123.9,242.43 124.63,242.37 125.37,243.13 126.29,249.53 127.21,246.57 128.18,244.53 129.16,245.88 130.1,249.29 131.04,242.19 131.81,248.85 132.59,238.52 133.53,249.4 134.48,246.72 135.42,251.81 136.36,239.73 137.23,243.89 138.1,239.15 139.06,249.95 140.02,238.52 140.9,251.84 141.78,245.91 142.59,251.3 143.39,240.96 144.18,242.2 144.98,242.54 145.66,241.94 146.35,242.29 147.22,250.21 148.09,244.89 148.92,245.81 149.75,243.64 150.58,244.16 151.41,242.89 152.16,243.76 152.91,245.61 153.61,246.58 154.31,239.01 155.07,250.14 155.82,246.84 156.55,247.93 157.28,243.09 157.99,244.5 158.7,237.9 159.32,245.07 159.95,242.22 160.8,246.55 161.65,243.59 162.38,250.45 163.1,244.57 163.8,249.19 164.49,239.73 165.36,245.84 166.23,244.87 166.82,246.92 167.42,243.37 168.22,245.94 169.02,244.82 169.87,248.68 170.73,244.33 171.54,244.96 172.35,247.2 173.05,247.8 173.74,239.86 174.34,243.61 174.93,238.77 175.66,250.54 176.39,245.71 177.09,252 177.79,246.89 178.6,242.63 179.41,240.67 180.14,252 180.87,239.78 181.69,251.73 182.52,246.04 183.13,247.35 183.73,239.73 184.31,247.43 184.88,244.95 185.63,245.7 186.39,241.17 187.07,248.37 187.75,239.27 188.58,243.74 189.42,245.56 190.05,251.19 190.69,238.11 191.26,249.78 191.83,245.16 192.62,246.08 193.41,244.44 194.01,244.68 194.61,238.32 195.31,250.27 196.01,246.79 196.61,250.52 197.21,241.98 198.02,247.66 198.83,240.1 199.44,245.32 200.05,246.95 200.61,250.97 201.16,240.36 201.91,250.39 202.66,244.44 203.23,245.43 203.8,245.1 204.52,249.26 205.25,238.32 205.81,246.82 206.38,245.07 207.15,245.94 207.92,238.45 208.58,248.88 209.24,239.55 209.79,242.43 210.34,244.2 210.98,251.94 211.61,238.52 212.22,248.95 212.83,241.98 213.44,250.26 214.05,242.41 214.56,242.27 215.06,244.49 215.79,244.27 216.52,241.8 217.24,248.93 217.95,240.64 218.47,245.35 218.99,246.03 219.52,251.62 220.04,238.9 220.74,247.21 221.45,240.61 222.09,251.15 222.72,243.09 223.33,243.34 223.93,239.27 224.43,251.31 224.93,238.84 225.55,252 226.18,247.35 226.77,247.29 227.35,238.19 227.94,247.54 228.52,240.4 229.23,243.64 229.94,246.47 230.47,245.88 231.01,241.38 231.47,250.91 231.93,240.04 232.54,242.33 233.15,245.71 233.63,248.26 234.12,244.95 234.83,247.66 235.54,246.8 236.08,246.96 236.61,242.88 237.11,244.77 237.62,245.04 238.23,245.77 238.85,240.06 239.42,252 239.99,240.94 240.48,246.76 240.97,242.32 241.52,246.1 242.08,239.38 242.7,244.34 243.32,241.87 243.99,250.99 244.66,239.12 245.16,244.41 245.67,246.17 246.25,251.11 246.82,243.34 247.41,250.81 248,245.17 248.67,242.72 249.35,238.23 249.92,244.38 250.49,245.21 250.93,243.41 251.37,242.56 251.88,244.68 252.38,240.49 252.94,247.15 253.49,240.47 253.95,251.49 254.4,239.76 254.99,251.31 255.58,238.62 255.94,250.83 256.31,244.61 256.84,251.37 257.36,246.69 257.8,243.59 258.24,239.88 258.83,251.26 259.42,246.46 259.88,243.57 260.33,238.29 260.98,243.63 261.62,242.62 262.16,251.61 262.7,241.45 263.05,242.33 263.41,243.39 264.05,247.15 264.69,244.68 265.3,244.83 265.91,243.23 266.43,248.6 266.95,245.99 267.34,249.61 267.72,239.54 268.36,252 268.99,246.03 269.55,246.56 270.11,238.71 270.71,243.15 271.32,241.33 271.94,252 272.57,240.97 272.97,246.34 273.37,245.76 273.96,243.15 274.56,241.71 275.05,251.54 275.54,242.46 275.97,244.6 276.39,241.24 276.91,245.08 277.43,244.17 277.84,242.15 278.26,242.02 278.77,242.28 279.28,240.48 279.85,242.15 280.41,238.51 280.83,246.55 281.25,243.53 281.68,252 282.11,238.05 282.68,248.73 283.24,246.14 283.82,247.81 284.4,241.32 285,251.15 285.59,247.14 286.07,244.96 286.55,241.21 287.01,245.47 287.48,238.93 287.79,244.49 288.11,245.18 288.66,250.37 289.21,238.55 289.71,246.63 290.21,243.16 290.56,250.23 290.91,238.19 291.34,245.44 291.76,238.61 292.09,243.26 292.43,247.38 292.82,245.56 293.22,246.17 293.59,242.91 293.96,245.81 294.35,249.76 294.74,244.02 295.3,247.7 295.87,246.61 296.21,251.43 296.55,243.02 296.83,248.14 297.11,239.4 297.58,243.29 298.06,242.04 298.36,251.3 298.66,243.68 299.01,248.56 299.35,243.32 299.86,251.12 300.37,244.9 300.8,242.95 301.24,245.9 301.52,252 301.8,239.88 302.14,251.99 302.48,238.79 302.91,250.34 303.34,240.45 303.81,242.31 304.28,241.36 304.78,248.21 305.28,246.22 305.63,252 305.98,244.67 306.41,251.15 306.85,246 307.23,245.9 307.61,243.82 308.13,252 308.65,244.39 308.93,243.14 309.21,241.58 309.73,248.52 310.24,239.35 310.5,252 310.76,240.36 311.06,245.28 311.37,237.9 311.65,245.7 311.93,245.15 312.36,244.14 312.79,241.62 313.02,252 313.25,241.73 313.71,246.64 314.16,239.89 314.49,252 314.82,247.28 315.09,246 315.35,247.32 315.59,243.52 315.82,243.9 316.13,243.77 316.44,239.32 316.76,242.02 317.08,245.12 317.33,252 317.57,241.7 317.86,242.12 318.15,240.48 318.6,251.27 319.04,243.24 319.53,244.36 320.01,238.04 320.27,248.63 320.54,239.12 320.83,245.57 321.12,243.07 321.44,244.77 321.76,242.33 322.07,247.42 322.39,244.03 322.7,250.04 323.02,241.08 323.45,250.97 323.89,243.62 324.13,246.35 324.38,241.19 324.72,245.19 325.06,246.75 325.34,245.65 325.62,244.17 325.97,243.15 326.33,246.27 326.56,245.98 326.79,241.13 327.09,251.87 327.39,241.49 327.72,248.11 328.05,246.63 328.28,249.45 328.51,238.93 328.78,252 329.05,238.24 329.45,247.18 329.86,241.52 330.09,242.71 330.31,240.42 330.62,250.58 330.92,244.01 331.17,246.19 331.42,245.85 331.88,252 332.34,241.2 332.59,245.38 332.84,240.47 333.17,247.6 333.5,238.2 333.72,249.16 333.93,245.76 334.1,250.03 334.27,244.51 334.66,250.97 335.04,241.08 335.41,245.67 335.78,238.69 336.03,245.82 336.27,238.61 336.58,250.26 336.88,241.85 337.13,246.53 337.38,246.48 337.71,244.59 338.03,243.93 338.49,243.78 338.94,246.33 339.13,246.38 339.32,241.97 339.76,250.32 340.19,238.61 340.39,245.15 340.59,244.85 341.04,244.55 341.49,246.18 341.69,248.51 341.89,240.06 342.14,248.19 342.39,238.91 342.64,243.41 342.88,239.95 343.16,252 343.44,238.98 343.68,247.4 343.91,245.28 344.09,243.12 344.27,237.86 344.53,242.16 344.79,239.17 345.1,248.98 345.42,246.84 345.79,247.52 346.17,244.82 346.31,242.61 346.46,246.94 346.78,243.69 347.11,238.24 347.51,248.03 347.9,240 348.08,246.42 348.26,242.66 348.4,246.12 348.55,241.42 348.91,249.44 349.28,246.93 349.43,251.59 349.59,243.66 349.84,242.83 350.09,239.47 350.37,245.43 350.65,239.31 350.98,243.46 351.32,242.65 351.65,243.55 351.99,244.91 352.18,251.5 352.38,246.29 352.56,250.84 352.74,240.64 352.96,242.06 353.17,240.59 353.48,246.99 353.8,240.42 353.96,246.45 354.12,239.31 354.38,242.47 354.63,247.22 354.8,248.76 354.96,242.59 355.25,249.64 355.54,243.13 355.73,251.89 355.92,238.8 356.18,243.23 356.44,245.65 356.79,248.56 357.13,245.49 357.28,252 357.42,240.46 357.55,249.92 357.68,242.68 357.99,250.05 358.3,242.69 358.61,250.75 358.91,242.59 359.1,250.26 359.28,243.86 359.53,242.54 359.78,239.83 359.93,251.04" fill="none" stroke="#b02838" stroke-width="0.8" opacity="0.9"/><polygon points="201.7288464847669,252 201.73,251.49 202.4,251.49 203.07,251.47 203.74,251.44 204.41,251.37 205.08,251.26 205.75,251.07 206.42,250.76 207.1,250.27 207.77,249.53 208.44,248.47 209.11,247.04 209.78,245.19 210.45,242.93 211.12,240.33 211.79,237.52 212.46,234.7 213.13,232.12 213.8,230.04 214.47,228.68 215.14,228.21 215.82,228.68 216.49,230.04 217.16,232.12 217.83,234.7 218.5,237.52 219.17,240.33 219.84,242.93 220.51,245.19 221.18,247.04 221.85,248.47 222.52,249.53 223.19,250.27 223.87,250.76 224.54,251.07 225.21,251.26 225.88,251.37 226.55,251.44 227.22,251.47 227.89,251.49 228.56,251.49 228.5608464847669,252" fill="#b83848" opacity="0.85"/><rect x="214.64" y="32.3" width="1.05" height="219.7" fill="#983040"/><rect x="248.3" y="213.14" width="1.05" height="38.86" fill="#8a6a70"/><rect x="267.99" y="203.55" width="1.05" height="48.45" fill="#7a5a60"/><rect x="281.96" y="228.21" width="1.05" height="23.79" fill="#a09098"/><rect x="292.79" y="204.92" width="1.05" height="47.08" fill="#7a5058"/><rect x="309.13" y="221.36" width="1.05" height="30.64" fill="#d0a0a8"/><rect x="25.5" y="7.5" width="335" height="244" fill="none" stroke="#c6c6c6" stroke-width="1"/><text x="24" y="21.1" text-anchor="end" font-size="7.2" fill="#4a4a4a" letter-spacing="-0.3" font-family='"Liberation Sans", sans-serif'>+10</text><text x="24" y="34.8" text-anchor="end" font-size="7.2" fill="#4a4a4a" letter-spacing="-0.3" font-family='"Liberation Sans", sans-serif'>0</text><text x="24" y="48.5" text-anchor="end" font-size="7.2" fill="#4a4a4a" letter-spacing="-0.3" font-family='"Liberation Sans", sans-serif'>-10</text><text x="24" y="62.2" text-anchor="end" font-size="7.2" fill="#4a4a4a" letter-spacing="-0.3" font-family='"Liberation Sans", sans-serif'>-20</text><text x="24" y="75.9" text-anchor="end" font-size="7.2" fill="#4a4a4a" letter-spacing="-0.3" font-family='"Liberation Sans", sans-serif'>-30</text><text x="24" y="89.6" text-anchor="end" font-size="7.2" fill="#4a4a4a" letter-spacing="-0.3" font-family='"Liberation Sans", sans-serif'>-40</text><text x="24" y="103.3" text-anchor="end" font-size="7.2" fill="#4a4a4a" letter-spacing="-0.3" font-family='"Liberation Sans", sans-serif'>-50</text><text x="24" y="117" text-anchor="end" font-size="7.2" fill="#4a4a4a" letter-spacing="-0.3" font-family='"Liberation Sans", sans-serif'>-60</text><text x="24" y="130.7" text-anchor="end" font-size="7.2" fill="#4a4a4a" letter-spacing="-0.3" font-family='"Liberation Sans", sans-serif'>-70</text><text x="24" y="144.4" text-anchor="end" font-size="7.2" fill="#4a4a4a" letter-spacing="-0.3" font-family='"Liberation Sans", sans-serif'>-80</text><text x="24" y="158.1" text-anchor="end" font-size="7.2" fill="#4a4a4a" letter-spacing="-0.3" font-family='"Liberation Sans", sans-serif'>-90</text><text x="24" y="171.8" text-anchor="end" font-size="7.2" fill="#4a4a4a" letter-spacing="-0.3" font-family='"Liberation Sans", sans-serif'>-100</text><text x="24" y="185.5" text-anchor="end" font-size="7.2" fill="#4a4a4a" letter-spacing="-0.3" font-family='"Liberation Sans", sans-serif'>-110</text><text x="24" y="199.2" text-anchor="end" font-size="7.2" fill="#4a4a4a" letter-spacing="-0.3" font-family='"Liberation Sans", sans-serif'>-120</text><text x="24" y="212.9" text-anchor="end" font-size="7.2" fill="#4a4a4a" letter-spacing="-0.3" font-family='"Liberation Sans", sans-serif'>-130</text><text x="24" y="226.6" text-anchor="end" font-size="7.2" fill="#4a4a4a" letter-spacing="-0.3" font-family='"Liberation Sans", sans-serif'>-140</text><text x="24" y="240.3" text-anchor="end" font-size="7.2" fill="#4a4a4a" letter-spacing="-0.3" font-family='"Liberation Sans", sans-serif'>-150</text><text x="24" y="254" text-anchor="end" font-size="7.2" fill="#4a4a4a" letter-spacing="-0.3" font-family='"Liberation Sans", sans-serif'>-160</text><text x="25.2" y="260" text-anchor="middle" font-size="7.2" fill="#4a4a4a" letter-spacing="-0.3" font-family='"Liberation Sans", sans-serif'>20</text><text x="44.89" y="260" text-anchor="middle" font-size="7.2" fill="#4a4a4a" letter-spacing="-0.3" font-family='"Liberation Sans", sans-serif'>30</text><text x="69.69" y="260" text-anchor="middle" font-size="7.2" fill="#4a4a4a" letter-spacing="-0.3" font-family='"Liberation Sans", sans-serif'>50</text><text x="103.34" y="260" text-anchor="middle" font-size="7.2" fill="#4a4a4a" letter-spacing="-0.3" font-family='"Liberation Sans", sans-serif'>100</text><text x="137" y="260" text-anchor="middle" font-size="7.2" fill="#4a4a4a" letter-spacing="-0.3" font-family='"Liberation Sans", sans-serif'>200</text><text x="156.69" y="260" text-anchor="middle" font-size="7.2" fill="#4a4a4a" letter-spacing="-0.3" font-family='"Liberation Sans", sans-serif'>300</text><text x="181.49" y="260" text-anchor="middle" font-size="7.2" fill="#4a4a4a" letter-spacing="-0.3" font-family='"Liberation Sans", sans-serif'>500</text><text x="215.14" y="260" text-anchor="middle" font-size="7.2" fill="#4a4a4a" letter-spacing="-0.3" font-family='"Liberation Sans", sans-serif'>1k</text><text x="248.8" y="260" text-anchor="middle" font-size="7.2" fill="#4a4a4a" letter-spacing="-0.3" font-family='"Liberation Sans", sans-serif'>2k</text><text x="268.49" y="260" text-anchor="middle" font-size="7.2" fill="#4a4a4a" letter-spacing="-0.3" font-family='"Liberation Sans", sans-serif'>3k</text><text x="293.29" y="260" text-anchor="middle" font-size="7.2" fill="#4a4a4a" letter-spacing="-0.3" font-family='"Liberation Sans", sans-serif'>5k</text><text x="326.94" y="260" text-anchor="middle" font-size="7.2" fill="#4a4a4a" letter-spacing="-0.3" font-family='"Liberation Sans", sans-serif'>10k</text><text x="360.6" y="260" text-anchor="middle" font-size="7.2" fill="#4a4a4a" letter-spacing="-0.3" font-family='"Liberation Sans", sans-serif'>20k</text><text x="193" y="266.3" text-anchor="middle" font-size="6.8" fill="#4a4a4a" font-family='"Liberation Sans", sans-serif'>Frequency (Hz)</text><text x="193" y="4.800000000000011" text-anchor="middle" font-size="6" fill="#4a4a4a" font-family='"Liberation Sans", sans-serif'>FFT</text><text transform="translate(6.600000000000023 128.8) rotate(-90)" text-anchor="middle" font-size="6.8" fill="#4a4a4a" font-family='"Liberation Sans", sans-serif'>Level (dB/A)</text></svg></div>
</div>
<svg width="800" height="636" style="position:absolute;left:0;top:0"><rect x="29" y="438" width="745" height="189" fill="#d9dcdf"/><rect x="29" y="437.8" width="745" height="2" fill="#b9bec1"/><rect x="29" y="439.8" width="745" height="2.7" fill="#387880"/><rect x="29" y="442.5" width="745" height="0.8" fill="#e6e8e9"/><rect x="29" y="443.3" width="745" height="10.5" fill="#dedfe0"/><rect x="29" y="453.8" width="745" height="1.9" fill="#c6c8ca"/><path d="M770 447h3.5M770 450h3.5" stroke="#333" stroke-width="1"/><rect x="29.8" y="444.8" width="6.5" height="6.6" fill="#273a44"/><path d="M33.05 445.9v4.4M30.9 448.1h4.3" stroke="#dfe8ec" stroke-width="1.3"/><text x="38" y="450.9" font-size="7.4" fill="#1c1c1c" text-anchor="start" font-weight="normal" font-family='"Liberation Sans", sans-serif' >Add Meter</text><circle cx="77" cy="448.2" r="0.8" fill="#333"/><rect x="83.1" y="444.9" width="6.9" height="6.6" fill="#1f2c34"/><rect x="84.1" y="446" width="3.5" height="4.4" fill="#d8e4e8"/><path d="M87.6 448.1l2-1.5v3z" fill="#e6eef0"/><text x="90.9" y="450.9" font-size="7.4" fill="#1c1c1c" text-anchor="start" font-weight="normal" font-family='"Liberation Sans", sans-serif' textLength="52" lengthAdjust="spacingAndGlyphs">Save Meter Data</text><rect x="149.8" y="444.9" width="6.4" height="6.4" fill="#23333b"/><path d="M152 446.3v3.6l2.8-1.8z" fill="#e8eef2"/><text x="158.4" y="450.7" font-size="7.4" fill="#1c1c1c" text-anchor="start" font-weight="normal" font-family='"Liberation Sans", sans-serif' textLength="27.5" lengthAdjust="spacingAndGlyphs">Regulate</text><path d="M400 441h1M402.3 441h1M404.6 441h1" stroke="#8fb0b8" stroke-width="0.8"/><rect x="397" y="455.7" width="3" height="171.3" fill="#c9cccf"/><rect x="767" y="455.7" width="3" height="171.3" fill="#c6c9cc"/><rect x="770" y="455.7" width="4" height="171.3" fill="#e2e4e6"/><rect x="29" y="540.7" width="738" height="2.3" fill="#b9bcbf"/><rect x="29" y="455.7" width="368" height="85" fill="#dfe3e6"/><rect x="29" y="455.7" width="368" height="15" fill="#e7ebee"/><text x="32" y="466" font-size="8.8" fill="#111" text-anchor="start" font-weight="bold" font-family='"Liberation Sans", sans-serif' textLength="42.5" lengthAdjust="spacingAndGlyphs">RMS Level</text><rect x="78" y="456.3" width="37" height="12.3" fill="#fbfbfb"/><text x="79.6" y="465.3" font-size="7" fill="#2a2a2a" text-anchor="start" font-weight="normal" font-family='"Liberation Sans", sans-serif' >Vrms</text><circle cx="111.4" cy="462.7" r="0.9" fill="#222"/><rect x="116" y="459.3" width="6.8" height="6.6" fill="#34444c"/><rect x="117" y="460.5" width="4.8" height="4.2" fill="#8d9ca3"/><path d="M117 462.59999999999997h4.8" stroke="#3a4a52" stroke-width="0.8"/><circle cx="125.5" cy="462.7" r="0.75" fill="#111"/><rect x="129.3" y="459.3" width="6.6" height="6.6" fill="#34444c"/><circle cx="132.6" cy="462.59999999999997" r="1.75" fill="#333" stroke="#f4f6f7" stroke-width="1.1"/><path d="M379.6 461.0v4.4h4.4v-1.8" fill="none" stroke="#2e3d58" stroke-width="1.2"/><path d="M381.4 463.7l2.9-2.8M382.4 460.59999999999997h2.4v2.4" fill="none" stroke="#2e3d58" stroke-width="1.05"/><path d="M389 460.3l4.6 4.8M393.6 460.3l-4.6 4.8" stroke="#333" stroke-width="1.1"/><rect x="29" y="504.2" width="94" height="1" fill="#b9bdc0"/><text x="33.2" y="493.5" font-size="17.4" fill="#303438" text-anchor="start" font-weight="normal" font-family='"Liberation Sans", sans-serif' textLength="30.6" lengthAdjust="spacingAndGlyphs">Ch1</text><text x="33.2" y="527.3" font-size="17.4" fill="#303438" text-anchor="start" font-weight="normal" font-family='"Liberation Sans", sans-serif' textLength="30.6" lengthAdjust="spacingAndGlyphs">Ch2</text><path d="M116.4 485.2h6l-3 6z" fill="#111"/><path d="M116.4 518.5h6l-3 6z" fill="#111"/><rect x="123" y="471.2" width="270" height="66.8" fill="#000"/><rect x="123" y="494.0" width="270" height="20.9" fill="#8f8f8f"/><rect x="123" y="495.0" width="270" height="2" fill="#959595"/><rect x="123" y="497.9" width="270" height="1.2" fill="#151515"/><rect x="123" y="500.6" width="270" height="0.8" fill="#7e7e7e"/><rect x="123" y="504.4" width="270" height="1.4" fill="#d0d0d0"/><rect x="123" y="509.0" width="270" height="1.2" fill="#151515"/><rect x="123" y="511.8" width="270" height="0.8" fill="#7e7e7e"/><rect x="123" y="494" width="201.15" height="9" fill="#17ee17"/><rect x="123" y="505.2" width="201.15" height="9.1" fill="#17ee17"/><rect x="123" y="497.8" width="200.85" height="1.4" fill="#000"/><rect x="123" y="509.1" width="200.85" height="1.4" fill="#000"/><text x="330.5" y="488.9" font-size="16.5" fill="#3ede3e" text-anchor="end" font-weight="normal" font-family='"Liberation Sans", sans-serif' >2.084</text><text x="330.5" y="531.2" font-size="16.5" fill="#3ede3e" text-anchor="end" font-weight="normal" font-family='"Liberation Sans", sans-serif' >2.068</text><text x="391" y="488.9" font-size="16.5" fill="#3ede3e" text-anchor="end" font-weight="normal" font-family='"Liberation Sans", sans-serif' >Vrms</text><text x="391" y="531.2" font-size="16.5" fill="#3ede3e" text-anchor="end" font-weight="normal" font-family='"Liberation Sans", sans-serif' >Vrms</text><rect x="400" y="455.7" width="367" height="85" fill="#dfe3e6"/><rect x="400" y="455.7" width="367" height="15" fill="#e7ebee"/><text x="402" y="466" font-size="8.8" fill="#111" text-anchor="start" font-weight="bold" font-family='"Liberation Sans", sans-serif' textLength="55" lengthAdjust="spacingAndGlyphs">THD+N Ratio</text><rect x="460" y="456.3" width="31.3" height="12.3" fill="#fbfbfb"/><text x="461.6" y="465.3" font-size="7" fill="#2a2a2a" text-anchor="start" font-weight="normal" font-family='"Liberation Sans", sans-serif' >%</text><circle cx="487.7" cy="462.7" r="0.9" fill="#222"/><rect x="492.3" y="459.3" width="6.8" height="6.6" fill="#34444c"/><rect x="493.3" y="460.5" width="4.8" height="4.2" fill="#8d9ca3"/><path d="M493.3 462.59999999999997h4.8" stroke="#3a4a52" stroke-width="0.8"/><circle cx="501.8" cy="462.7" r="0.75" fill="#111"/><rect x="505.6" y="459.3" width="6.6" height="6.6" fill="#34444c"/><circle cx="508.90000000000003" cy="462.59999999999997" r="1.75" fill="#333" stroke="#f4f6f7" stroke-width="1.1"/><path d="M749.6 461.0v4.4h4.4v-1.8" fill="none" stroke="#2e3d58" stroke-width="1.2"/><path d="M751.4 463.7l2.9-2.8M752.4 460.59999999999997h2.4v2.4" fill="none" stroke="#2e3d58" stroke-width="1.05"/><path d="M759 460.3l4.6 4.8M763.6 460.3l-4.6 4.8" stroke="#333" stroke-width="1.1"/><rect x="400" y="504.2" width="93.39999999999998" height="1" fill="#b9bdc0"/><text x="402.9" y="493.5" font-size="17.4" fill="#303438" text-anchor="start" font-weight="normal" font-family='"Liberation Sans", sans-serif' textLength="30.6" lengthAdjust="spacingAndGlyphs">Ch1</text><text x="402.9" y="527.3" font-size="17.4" fill="#303438" text-anchor="start" font-weight="normal" font-family='"Liberation Sans", sans-serif' textLength="30.6" lengthAdjust="spacingAndGlyphs">Ch2</text><path d="M486.79999999999995 485.2h6l-3 6z" fill="#111"/><path d="M486.79999999999995 518.5h6l-3 6z" fill="#111"/><rect x="493.4" y="471.2" width="269.3" height="66.8" fill="#000"/><rect x="493.4" y="494.0" width="269.3" height="20.9" fill="#8f8f8f"/><rect x="493.4" y="495.0" width="269.3" height="2" fill="#959595"/><rect x="493.4" y="497.9" width="269.3" height="1.2" fill="#151515"/><rect x="493.4" y="500.6" width="269.3" height="0.8" fill="#7e7e7e"/><rect x="493.4" y="504.4" width="269.3" height="1.4" fill="#d0d0d0"/><rect x="493.4" y="509.0" width="269.3" height="1.2" fill="#151515"/><rect x="493.4" y="511.8" width="269.3" height="0.8" fill="#7e7e7e"/><rect x="493.4" y="494" width="6.73" height="9" fill="#17ee17"/><rect x="493.4" y="505.2" width="6.73" height="9.1" fill="#17ee17"/><rect x="496.4" y="497.8" width="3.43" height="1.4" fill="#000"/><rect x="496.4" y="509.1" width="3.43" height="1.4" fill="#000"/><text x="733.3" y="488.9" font-size="16.5" fill="#3ede3e" text-anchor="end" font-weight="normal" font-family='"Liberation Sans", sans-serif' >0.000134</text><text x="733.3" y="531.2" font-size="16.5" fill="#3ede3e" text-anchor="end" font-weight="normal" font-family='"Liberation Sans", sans-serif' >0.000143</text><text x="760" y="488.9" font-size="16.5" fill="#3ede3e" text-anchor="end" font-weight="normal" font-family='"Liberation Sans", sans-serif' >%</text><text x="760" y="531.2" font-size="16.5" fill="#3ede3e" text-anchor="end" font-weight="normal" font-family='"Liberation Sans", sans-serif' >%</text><rect x="29" y="543" width="368" height="85" fill="#dfe3e6"/><rect x="29" y="543" width="368" height="15" fill="#e7ebee"/><text x="32" y="553.3" font-size="8.8" fill="#111" text-anchor="start" font-weight="bold" font-family='"Liberation Sans", sans-serif' textLength="42" lengthAdjust="spacingAndGlyphs">Frequency</text><rect x="77" y="543.6" width="32.4" height="12.3" fill="#fbfbfb"/><text x="78.6" y="552.6" font-size="7" fill="#2a2a2a" text-anchor="start" font-weight="normal" font-family='"Liberation Sans", sans-serif' >Hz</text><circle cx="105.80000000000001" cy="550" r="0.9" fill="#222"/><rect x="110.4" y="546.6" width="6.8" height="6.6" fill="#34444c"/><rect x="111.4" y="547.8" width="4.8" height="4.2" fill="#8d9ca3"/><path d="M111.4 549.9h4.8" stroke="#3a4a52" stroke-width="0.8"/><circle cx="119.9" cy="550" r="0.75" fill="#111"/><rect x="123.7" y="546.6" width="6.6" height="6.6" fill="#34444c"/><circle cx="127.0" cy="549.9" r="1.75" fill="#333" stroke="#f4f6f7" stroke-width="1.1"/><path d="M379.6 548.3v4.4h4.4v-1.8" fill="none" stroke="#2e3d58" stroke-width="1.2"/><path d="M381.4 551l2.9-2.8M382.4 547.9h2.4v2.4" fill="none" stroke="#2e3d58" stroke-width="1.05"/><path d="M389 547.6l4.6 4.8M393.6 547.6l-4.6 4.8" stroke="#333" stroke-width="1.1"/><rect x="29" y="591.5" width="94" height="1" fill="#b9bdc0"/><text x="33.2" y="580.8" font-size="17.4" fill="#303438" text-anchor="start" font-weight="normal" font-family='"Liberation Sans", sans-serif' textLength="30.6" lengthAdjust="spacingAndGlyphs">Ch1</text><text x="33.2" y="614.6" font-size="17.4" fill="#303438" text-anchor="start" font-weight="normal" font-family='"Liberation Sans", sans-serif' textLength="30.6" lengthAdjust="spacingAndGlyphs">Ch2</text><path d="M116.4 572.5h6l-3 6z" fill="#111"/><path d="M116.4 605.8h6l-3 6z" fill="#111"/><rect x="123" y="558.5" width="270" height="66.8" fill="#000"/><rect x="123" y="581.3" width="270" height="20.9" fill="#8f8f8f"/><rect x="123" y="582.3" width="270" height="2" fill="#959595"/><rect x="123" y="585.1999999999999" width="270" height="1.2" fill="#151515"/><rect x="123" y="587.9" width="270" height="0.8" fill="#7e7e7e"/><rect x="123" y="591.6999999999999" width="270" height="1.4" fill="#d0d0d0"/><rect x="123" y="596.3" width="270" height="1.2" fill="#151515"/><rect x="123" y="599.0999999999999" width="270" height="0.8" fill="#7e7e7e"/><rect x="123" y="581.3" width="153.63" height="9" fill="#17ee17"/><rect x="123" y="592.5" width="153.63" height="9.1" fill="#17ee17"/><rect x="123" y="585.1" width="153.33" height="1.4" fill="#000"/><rect x="123" y="596.4" width="153.33" height="1.4" fill="#000"/><text x="345" y="576.2" font-size="16.5" fill="#3ede3e" text-anchor="end" font-weight="normal" font-family='"Liberation Sans", sans-serif' >0.99999</text><text x="345" y="618.5" font-size="16.5" fill="#3ede3e" text-anchor="end" font-weight="normal" font-family='"Liberation Sans", sans-serif' >0.99999</text><text x="391" y="576.2" font-size="16.5" fill="#3ede3e" text-anchor="end" font-weight="normal" font-family='"Liberation Sans", sans-serif' >kHz</text><text x="391" y="618.5" font-size="16.5" fill="#3ede3e" text-anchor="end" font-weight="normal" font-family='"Liberation Sans", sans-serif' >kHz</text><rect x="400" y="543" width="367" height="85" fill="#dfe3e6"/><rect x="400" y="543" width="367" height="15" fill="#e7ebee"/><text x="402" y="553.3" font-size="8.8" fill="#111" text-anchor="start" font-weight="bold" font-family='"Liberation Sans", sans-serif' textLength="27" lengthAdjust="spacingAndGlyphs">SINAD</text><rect x="431.8" y="543.6" width="31.8" height="12.3" fill="#fbfbfb"/><text x="433.4" y="552.6" font-size="7" fill="#2a2a2a" text-anchor="start" font-weight="normal" font-family='"Liberation Sans", sans-serif' >dB</text><circle cx="460.0" cy="550" r="0.9" fill="#222"/><rect x="464.6" y="546.6" width="6.8" height="6.6" fill="#34444c"/><rect x="465.6" y="547.8" width="4.8" height="4.2" fill="#8d9ca3"/><path d="M465.6 549.9h4.8" stroke="#3a4a52" stroke-width="0.8"/><circle cx="474.1" cy="550" r="0.75" fill="#111"/><rect x="477.90000000000003" y="546.6" width="6.6" height="6.6" fill="#34444c"/><circle cx="481.20000000000005" cy="549.9" r="1.75" fill="#333" stroke="#f4f6f7" stroke-width="1.1"/><path d="M749.6 548.3v4.4h4.4v-1.8" fill="none" stroke="#2e3d58" stroke-width="1.2"/><path d="M751.4 551l2.9-2.8M752.4 547.9h2.4v2.4" fill="none" stroke="#2e3d58" stroke-width="1.05"/><path d="M759 547.6l4.6 4.8M763.6 547.6l-4.6 4.8" stroke="#333" stroke-width="1.1"/><rect x="400" y="591.5" width="93.39999999999998" height="1" fill="#b9bdc0"/><text x="402.9" y="580.8" font-size="17.4" fill="#303438" text-anchor="start" font-weight="normal" font-family='"Liberation Sans", sans-serif' textLength="30.6" lengthAdjust="spacingAndGlyphs">Ch1</text><text x="402.9" y="614.6" font-size="17.4" fill="#303438" text-anchor="start" font-weight="normal" font-family='"Liberation Sans", sans-serif' textLength="30.6" lengthAdjust="spacingAndGlyphs">Ch2</text><path d="M486.79999999999995 572.5h6l-3 6z" fill="#111"/><path d="M486.79999999999995 605.8h6l-3 6z" fill="#111"/><rect x="493.4" y="558.5" width="269.3" height="66.8" fill="#000"/><rect x="493.4" y="581.3" width="269.3" height="20.9" fill="#8f8f8f"/><rect x="493.4" y="582.3" width="269.3" height="2" fill="#959595"/><rect x="493.4" y="585.1999999999999" width="269.3" height="1.2" fill="#151515"/><rect x="493.4" y="587.9" width="269.3" height="0.8" fill="#7e7e7e"/><rect x="493.4" y="591.6999999999999" width="269.3" height="1.4" fill="#d0d0d0"/><rect x="493.4" y="596.3" width="269.3" height="1.2" fill="#151515"/><rect x="493.4" y="599.0999999999999" width="269.3" height="0.8" fill="#7e7e7e"/><rect x="493.4" y="581.3" width="264.72" height="9" fill="#17ee17"/><rect x="493.4" y="592.5" width="263.91" height="9.1" fill="#17ee17"/><rect x="493.4" y="585.1" width="264.42" height="1.4" fill="#000"/><rect x="493.4" y="596.4" width="263.61" height="1.4" fill="#000"/><text x="726" y="576.2" font-size="16.5" fill="#3ede3e" text-anchor="end" font-weight="normal" font-family='"Liberation Sans", sans-serif' >117.472</text><text x="726" y="618.5" font-size="16.5" fill="#3ede3e" text-anchor="end" font-weight="normal" font-family='"Liberation Sans", sans-serif' >116.900</text><text x="760" y="576.2" font-size="16.5" fill="#3ede3e" text-anchor="end" font-weight="normal" font-family='"Liberation Sans", sans-serif' >dB</text><text x="760" y="618.5" font-size="16.5" fill="#3ede3e" text-anchor="end" font-weight="normal" font-family='"Liberation Sans", sans-serif' >dB</text></svg>
<div id="label"><span>Distortion without A-wt</span></div>
</body></html>
